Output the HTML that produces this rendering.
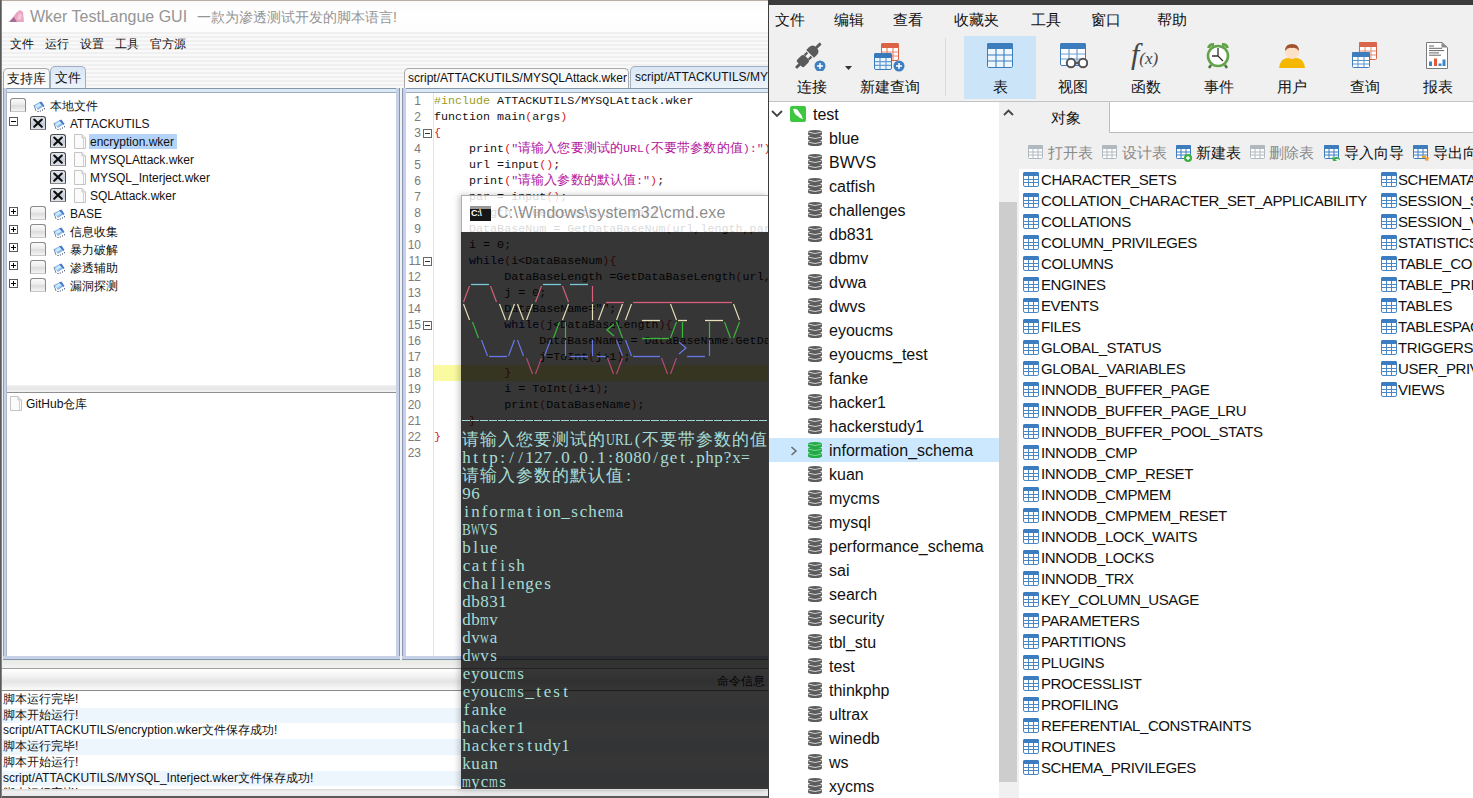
<!DOCTYPE html>
<html><head><meta charset="utf-8">
<style>
*{margin:0;padding:0;box-sizing:border-box}
html,body{width:1473px;height:798px;overflow:hidden;background:#fff;font-family:"Liberation Sans",sans-serif}
.a{position:absolute;white-space:nowrap}
#L{position:absolute;left:0;top:0;width:768px;height:798px;background:#f3f3f3;overflow:hidden}
#N{position:absolute;left:768px;top:0;width:705px;height:798px;background:#f0f0f0;overflow:hidden}
#C{position:absolute;left:461px;top:195px;width:307px;height:595px;overflow:hidden;box-shadow:-2px 0 6px rgba(0,0,0,0.22)}
.cb{width:16px;height:14px;border:1px solid #8a8a8a;border-bottom-color:#c8c8c8;border-radius:3px 3px 1px 1px;background:linear-gradient(#fafafa,#ececec 45%,#dcdcdc 55%,#f4f4f4)}
.cbx{border-color:#4a4a4a;border-bottom-color:#888;background:linear-gradient(#e4e8f0,#cdd4e0 50%,#c4ccda 55%,#dfe4ec)}
.pm{width:9px;height:9px;border:1px solid #5a5a5a;background:#fff}
.tt{font-size:12px;color:#111;line-height:16px}
.ln{left:405px;width:16px;text-align:right;font-family:"Liberation Sans",sans-serif;font-size:12px;color:#7a7a7a;line-height:16px}
.code{white-space:pre;left:434px;font-family:"Liberation Mono",monospace;font-size:11.7px;color:#111;line-height:16px}
.code span{}
.fold{left:423px;width:9px;height:9px;border:1px solid #666;background:#fff}
.fold:after{content:"";position:absolute;left:1px;top:3px;width:5px;height:1px;background:#333}
.log{left:2px;width:766px;font-size:12px;color:#111;line-height:15.7px;height:15.7px;padding-left:1px}
.cmdt{white-space:pre;left:1px;font-family:"Liberation Serif",serif;font-size:17px;line-height:18px;color:#a6dcd6}
.cmdt i{font-style:normal;display:inline-block;width:9px;text-align:center}
.cj{font-size:17px;letter-spacing:1px}
.cjc{font-size:13px;letter-spacing:0.1px}

.cmdt b{font-weight:normal;display:inline-block;transform-origin:0 50%}

</style></head><body>
<div id="L">
 <!-- title -->
 <div class="a" style="left:0;top:0;width:768px;height:32px;background:linear-gradient(#fafafa,#fff 40%,#fdfdfd);border-top:1px solid #b9aea6"></div>
 <svg class="a" style="left:8px;top:9px" width="17" height="14" viewBox="0 0 17 14"><path d="M1 13 L9 3 L12 1 L15 3 L16 13 Z" fill="#e9a6c3"/><path d="M1 13 L6 8 L9 13Z" fill="#a56b96"/><path d="M11 4 L14 6 L13 11 L9 10Z" fill="#f3c4da"/></svg>
 <div class="a" style="left:30px;top:8px;font-size:16px;color:#959595">Wker TestLangue GUI</div>
 <div class="a" style="left:197px;top:8px;font-size:14.3px;color:#959595">一款为渗透测试开发的脚本语言!</div>
 <!-- menubar + stripes -->
 <div class="a" style="left:0;top:32px;width:768px;height:58px;background:repeating-linear-gradient(#f0f0f0 0px,#f0f0f0 2px,#f9f9f9 2px,#f9f9f9 4px)"></div>
 <div class="a" style="left:10px;top:36px;font-size:12px;color:#111;word-spacing:0">文件</div>
 <div class="a" style="left:45px;top:36px;font-size:12px;color:#111">运行</div>
 <div class="a" style="left:80px;top:36px;font-size:12px;color:#111">设置</div>
 <div class="a" style="left:115px;top:36px;font-size:12px;color:#111">工具</div>
 <div class="a" style="left:150px;top:36px;font-size:12px;color:#111">官方源</div>
 <!-- left tabs -->
 <div class="a" style="left:3px;top:68px;width:47px;height:21px;border:1px solid #a9a9a9;border-bottom:none;border-radius:5px 5px 0 0;background:linear-gradient(#f7f7f7,#fdfdfd)"></div>
 <div class="a" style="left:7px;top:70px;font-size:13px;color:#111">支持库</div>
 <div class="a" style="left:50px;top:66px;width:36px;height:23px;border:1px solid #9fb0c4;border-bottom:none;border-radius:5px 5px 0 0;background:linear-gradient(#d9e6f3,#eef4fb)"></div>
 <div class="a" style="left:55px;top:69px;font-size:13px;color:#111">文件</div>
 <!-- editor tabs -->
 <div class="a" style="left:404px;top:68px;width:225px;height:21px;border:1px solid #a9a9a9;border-bottom:none;border-radius:5px 5px 0 0;background:linear-gradient(#f7f7f7,#fdfdfd)"></div>
 <div class="a" style="left:408px;top:71px;font-size:12px;color:#111">script/ATTACKUTILS/MYSQLAttack.wker</div>
 <div class="a" style="left:630px;top:66px;width:160px;height:23px;border:1px solid #9fb0c4;border-bottom:none;border-radius:5px 5px 0 0;background:linear-gradient(#d9e6f3,#eef4fb)"></div>
 <div class="a" style="left:635px;top:70px;font-size:12px;color:#111">script/ATTACKUTILS/MYSQLAttack.wker</div>
 <!-- tree panel -->
 <div class="a" style="left:3px;top:88px;width:397px;height:5px;background:#dce8f4;border-top:1px solid #8496ac;border-bottom:1px solid #9aabbf"></div>
 <div class="a" style="left:3px;top:88px;width:4px;height:572px;background:#c6d0e6;border-left:1px solid #8d9bb0;border-right:1px solid #aab8cc"></div>
 <div class="a" style="left:396px;top:88px;width:4px;height:572px;background:#c6d0e6;border-right:1px solid #8496ac"></div>
 <div class="a" style="left:3px;top:656px;width:397px;height:4px;background:#c6d0e6;border-bottom:1px solid #8496ac"></div>
 <div class="a" style="left:7px;top:93px;width:389px;height:292px;background:#fff"></div>
 <div class="a" style="left:7px;top:385px;width:389px;height:8px;background:linear-gradient(#f0f0f0,#e6e6e6 50%,#f3f3f3);border-bottom:1px solid #8f8f8f"></div>
 <div class="a" style="left:7px;top:393px;width:389px;height:263px;background:#fff"></div>
 <!-- editor panel -->
 <div class="a" style="left:402px;top:88px;width:366px;height:5px;background:#dce8f4;border-top:1px solid #8496ac;border-bottom:1px solid #9aabbf"></div>
 <div class="a" style="left:402px;top:88px;width:4px;height:572px;background:#c8ccee;border-left:1px solid #8496ac"></div>
 <div class="a" style="left:402px;top:656px;width:366px;height:4px;background:#c6d0e6;border-bottom:1px solid #8496ac"></div>
 <div class="a" style="left:406px;top:93px;width:362px;height:563px;background:#fff"></div>
 <div class="a" style="left:433px;top:93px;width:1px;height:563px;background:#e4e4e4"></div>
 <!-- bottom area -->
 <div class="a" style="left:0;top:660px;width:768px;height:8px;background:linear-gradient(#e8eae4,#f2f2f2)"></div>
 <div class="a" style="left:0;top:668px;width:768px;height:23px;background:linear-gradient(#fff,#f4f4f4 30%,#e5e5e5 60%,#fafafa);border-top:1px solid #a0a0a0;border-bottom:1px solid #8a8a8a"></div>
 <div class="a" style="left:0;top:691px;width:768px;height:107px;background:#fff"></div>
<!--BOTTOM-->
<div class="a cb" style="left:10px;top:98px"></div>
<svg class="a" style="left:33px;top:101px" width="13" height="12" viewBox="0 0 13 12"><path d="M1 4 L7 1 L11 5 L5 9 Z" fill="#8fb6ec"/><path d="M2 5 L7 2 L9 4 L4 7Z" fill="#c6ecfc"/><path d="M6 1.5 L8.5 0.5 L11.5 5 L10.5 6Z" fill="#4a78c8"/><path d="M1 4 L3 10" stroke="#6d8aa8" stroke-width="1"/><path d="M4.5 10.5 H5.5 M6.8 10 H7.8 M9 9 H10 M11 7.8 H12" stroke="#2a3a5a" stroke-width="1.1"/></svg>
<div class="a tt" style="left:50px;top:98px">本地文件</div>
<div class="a pm" style="left:9px;top:117px"><div style="position:absolute;left:1px;top:3px;width:5px;height:1px;background:#000"></div></div>
<div class="a cb cbx" style="left:30px;top:116px"><svg width="16" height="14" viewBox="0 0 16 14" style="position:absolute;left:-1px;top:-1px"><path d="M4.2 3.5 L11.8 10.8 M11.8 3.5 L4.2 10.8" stroke="#0d0d0d" stroke-width="2.1" stroke-linecap="round"/></svg></div>
<svg class="a" style="left:53px;top:119px" width="13" height="12" viewBox="0 0 13 12"><path d="M1 4 L7 1 L11 5 L5 9 Z" fill="#8fb6ec"/><path d="M2 5 L7 2 L9 4 L4 7Z" fill="#c6ecfc"/><path d="M6 1.5 L8.5 0.5 L11.5 5 L10.5 6Z" fill="#4a78c8"/><path d="M1 4 L3 10" stroke="#6d8aa8" stroke-width="1"/><path d="M4.5 10.5 H5.5 M6.8 10 H7.8 M9 9 H10 M11 7.8 H12" stroke="#2a3a5a" stroke-width="1.1"/></svg>
<div class="a tt" style="left:70px;top:116px">ATTACKUTILS</div>
<div class="a cb cbx" style="left:50px;top:134px"><svg width="16" height="14" viewBox="0 0 16 14" style="position:absolute;left:-1px;top:-1px"><path d="M4.2 3.5 L11.8 10.8 M11.8 3.5 L4.2 10.8" stroke="#0d0d0d" stroke-width="2.1" stroke-linecap="round"/></svg></div>
<svg class="a" style="left:74px;top:134px" width="12" height="15" viewBox="0 0 12 15"><path d="M0.5 0.5 H8 L11.5 4 V14.5 H0.5Z" fill="#fbfbfb" stroke="#c4c4c4"/><path d="M8 0.5 V4 H11.5" fill="#e8e8e8" stroke="#c4c4c4"/><path d="M9.5 5 V14" stroke="#d0d0d0"/></svg>
<div class="a" style="left:89px;top:134px;width:88px;height:15px;background:#b3d4f8"></div>
<div class="a tt" style="left:90px;top:134px">encryption.wker</div>
<div class="a cb cbx" style="left:50px;top:152px"><svg width="16" height="14" viewBox="0 0 16 14" style="position:absolute;left:-1px;top:-1px"><path d="M4.2 3.5 L11.8 10.8 M11.8 3.5 L4.2 10.8" stroke="#0d0d0d" stroke-width="2.1" stroke-linecap="round"/></svg></div>
<svg class="a" style="left:74px;top:152px" width="12" height="15" viewBox="0 0 12 15"><path d="M0.5 0.5 H8 L11.5 4 V14.5 H0.5Z" fill="#fbfbfb" stroke="#c4c4c4"/><path d="M8 0.5 V4 H11.5" fill="#e8e8e8" stroke="#c4c4c4"/><path d="M9.5 5 V14" stroke="#d0d0d0"/></svg>
<div class="a tt" style="left:90px;top:152px">MYSQLAttack.wker</div>
<div class="a cb cbx" style="left:50px;top:170px"><svg width="16" height="14" viewBox="0 0 16 14" style="position:absolute;left:-1px;top:-1px"><path d="M4.2 3.5 L11.8 10.8 M11.8 3.5 L4.2 10.8" stroke="#0d0d0d" stroke-width="2.1" stroke-linecap="round"/></svg></div>
<svg class="a" style="left:74px;top:170px" width="12" height="15" viewBox="0 0 12 15"><path d="M0.5 0.5 H8 L11.5 4 V14.5 H0.5Z" fill="#fbfbfb" stroke="#c4c4c4"/><path d="M8 0.5 V4 H11.5" fill="#e8e8e8" stroke="#c4c4c4"/><path d="M9.5 5 V14" stroke="#d0d0d0"/></svg>
<div class="a tt" style="left:90px;top:170px">MYSQL_Interject.wker</div>
<div class="a cb cbx" style="left:50px;top:188px"><svg width="16" height="14" viewBox="0 0 16 14" style="position:absolute;left:-1px;top:-1px"><path d="M4.2 3.5 L11.8 10.8 M11.8 3.5 L4.2 10.8" stroke="#0d0d0d" stroke-width="2.1" stroke-linecap="round"/></svg></div>
<svg class="a" style="left:74px;top:188px" width="12" height="15" viewBox="0 0 12 15"><path d="M0.5 0.5 H8 L11.5 4 V14.5 H0.5Z" fill="#fbfbfb" stroke="#c4c4c4"/><path d="M8 0.5 V4 H11.5" fill="#e8e8e8" stroke="#c4c4c4"/><path d="M9.5 5 V14" stroke="#d0d0d0"/></svg>
<div class="a tt" style="left:90px;top:188px">SQLAttack.wker</div>
<div class="a pm" style="left:9px;top:207px"><div style="position:absolute;left:1px;top:3px;width:5px;height:1px;background:#000"></div><div style="position:absolute;left:3px;top:1px;width:1px;height:5px;background:#000"></div></div>
<div class="a cb" style="left:30px;top:206px"></div>
<svg class="a" style="left:53px;top:209px" width="13" height="12" viewBox="0 0 13 12"><path d="M1 4 L7 1 L11 5 L5 9 Z" fill="#8fb6ec"/><path d="M2 5 L7 2 L9 4 L4 7Z" fill="#c6ecfc"/><path d="M6 1.5 L8.5 0.5 L11.5 5 L10.5 6Z" fill="#4a78c8"/><path d="M1 4 L3 10" stroke="#6d8aa8" stroke-width="1"/><path d="M4.5 10.5 H5.5 M6.8 10 H7.8 M9 9 H10 M11 7.8 H12" stroke="#2a3a5a" stroke-width="1.1"/></svg>
<div class="a tt" style="left:70px;top:206px">BASE</div>
<div class="a pm" style="left:9px;top:225px"><div style="position:absolute;left:1px;top:3px;width:5px;height:1px;background:#000"></div><div style="position:absolute;left:3px;top:1px;width:1px;height:5px;background:#000"></div></div>
<div class="a cb" style="left:30px;top:224px"></div>
<svg class="a" style="left:53px;top:227px" width="13" height="12" viewBox="0 0 13 12"><path d="M1 4 L7 1 L11 5 L5 9 Z" fill="#8fb6ec"/><path d="M2 5 L7 2 L9 4 L4 7Z" fill="#c6ecfc"/><path d="M6 1.5 L8.5 0.5 L11.5 5 L10.5 6Z" fill="#4a78c8"/><path d="M1 4 L3 10" stroke="#6d8aa8" stroke-width="1"/><path d="M4.5 10.5 H5.5 M6.8 10 H7.8 M9 9 H10 M11 7.8 H12" stroke="#2a3a5a" stroke-width="1.1"/></svg>
<div class="a tt" style="left:70px;top:224px">信息收集</div>
<div class="a pm" style="left:9px;top:243px"><div style="position:absolute;left:1px;top:3px;width:5px;height:1px;background:#000"></div><div style="position:absolute;left:3px;top:1px;width:1px;height:5px;background:#000"></div></div>
<div class="a cb" style="left:30px;top:242px"></div>
<svg class="a" style="left:53px;top:245px" width="13" height="12" viewBox="0 0 13 12"><path d="M1 4 L7 1 L11 5 L5 9 Z" fill="#8fb6ec"/><path d="M2 5 L7 2 L9 4 L4 7Z" fill="#c6ecfc"/><path d="M6 1.5 L8.5 0.5 L11.5 5 L10.5 6Z" fill="#4a78c8"/><path d="M1 4 L3 10" stroke="#6d8aa8" stroke-width="1"/><path d="M4.5 10.5 H5.5 M6.8 10 H7.8 M9 9 H10 M11 7.8 H12" stroke="#2a3a5a" stroke-width="1.1"/></svg>
<div class="a tt" style="left:70px;top:242px">暴力破解</div>
<div class="a pm" style="left:9px;top:261px"><div style="position:absolute;left:1px;top:3px;width:5px;height:1px;background:#000"></div><div style="position:absolute;left:3px;top:1px;width:1px;height:5px;background:#000"></div></div>
<div class="a cb" style="left:30px;top:260px"></div>
<svg class="a" style="left:53px;top:263px" width="13" height="12" viewBox="0 0 13 12"><path d="M1 4 L7 1 L11 5 L5 9 Z" fill="#8fb6ec"/><path d="M2 5 L7 2 L9 4 L4 7Z" fill="#c6ecfc"/><path d="M6 1.5 L8.5 0.5 L11.5 5 L10.5 6Z" fill="#4a78c8"/><path d="M1 4 L3 10" stroke="#6d8aa8" stroke-width="1"/><path d="M4.5 10.5 H5.5 M6.8 10 H7.8 M9 9 H10 M11 7.8 H12" stroke="#2a3a5a" stroke-width="1.1"/></svg>
<div class="a tt" style="left:70px;top:260px">渗透辅助</div>
<div class="a pm" style="left:9px;top:279px"><div style="position:absolute;left:1px;top:3px;width:5px;height:1px;background:#000"></div><div style="position:absolute;left:3px;top:1px;width:1px;height:5px;background:#000"></div></div>
<div class="a cb" style="left:30px;top:278px"></div>
<svg class="a" style="left:53px;top:281px" width="13" height="12" viewBox="0 0 13 12"><path d="M1 4 L7 1 L11 5 L5 9 Z" fill="#8fb6ec"/><path d="M2 5 L7 2 L9 4 L4 7Z" fill="#c6ecfc"/><path d="M6 1.5 L8.5 0.5 L11.5 5 L10.5 6Z" fill="#4a78c8"/><path d="M1 4 L3 10" stroke="#6d8aa8" stroke-width="1"/><path d="M4.5 10.5 H5.5 M6.8 10 H7.8 M9 9 H10 M11 7.8 H12" stroke="#2a3a5a" stroke-width="1.1"/></svg>
<div class="a tt" style="left:70px;top:278px">漏洞探测</div>
<svg class="a" style="left:10px;top:396px" width="12" height="15" viewBox="0 0 12 15"><path d="M0.5 0.5 H8 L11.5 4 V14.5 H0.5Z" fill="#fbfbfb" stroke="#c4c4c4"/><path d="M8 0.5 V4 H11.5" fill="#e8e8e8" stroke="#c4c4c4"/><path d="M9.5 5 V14" stroke="#d0d0d0"/></svg>
<div class="a tt" style="left:26px;top:396px">GitHub仓库</div>
<div class="a" style="left:434px;top:365px;width:334px;height:16px;background:#fafaa0"></div>
<div class="a ln" style="top:93px">1</div>
<div class="a code" style="top:93px"><span style="color:#9c9c1a">#include</span> ATTACKUTILS/MYSQLAttack.wker</div>
<div class="a ln" style="top:109px">2</div>
<div class="a code" style="top:109px">function main<span style="color:#d82020">(</span>args<span style="color:#d82020">)</span></div>
<div class="a ln" style="top:125px">3</div>
<div class="a code" style="top:125px"><span style="color:#d82020">{</span></div>
<div class="a ln" style="top:141px">4</div>
<div class="a code" style="top:141px">     print<span style="color:#d82020">(</span><span style="color:#b5179e">"<span class="cjc">请输入您要测试的</span>URL(<span class="cjc">不要带参数的值</span>):"</span><span style="color:#d82020">)</span>;</div>
<div class="a ln" style="top:157px">5</div>
<div class="a code" style="top:157px">     url =input<span style="color:#d82020">()</span>;</div>
<div class="a ln" style="top:173px">6</div>
<div class="a code" style="top:173px">     print<span style="color:#d82020">(</span><span style="color:#b5179e">"<span class="cjc">请输入参数的默认值</span>:"</span><span style="color:#d82020">)</span>;</div>
<div class="a ln" style="top:189px">7</div>
<div class="a code" style="top:189px">     par = input<span style="color:#d82020">()</span>;</div>
<div class="a ln" style="top:205px">8</div>
<div class="a code" style="top:205px">     length = GetLength<span style="color:#d82020">(</span>url,par<span style="color:#d82020">)</span>;</div>
<div class="a ln" style="top:221px">9</div>
<div class="a code" style="top:221px">     DataBaseNum = GetDataBaseNum<span style="color:#d82020">(</span>url,length,par<span style="color:#d82020">)</span>;</div>
<div class="a ln" style="top:237px">10</div>
<div class="a code" style="top:237px">     i = 0;</div>
<div class="a ln" style="top:253px">11</div>
<div class="a code" style="top:253px">     <span style="color:#00007f">while</span><span style="color:#d82020">(</span>i&lt;DataBaseNum<span style="color:#d82020">)</span><span style="color:#d82020">{</span></div>
<div class="a ln" style="top:269px">12</div>
<div class="a code" style="top:269px">          DataBaseLength =GetDataBaseLength<span style="color:#d82020">(</span>url,length,par<span style="color:#d82020">)</span>;</div>
<div class="a ln" style="top:285px">13</div>
<div class="a code" style="top:285px">          j = 0;</div>
<div class="a ln" style="top:301px">14</div>
<div class="a code" style="top:301px">          DataBaseName="";</div>
<div class="a ln" style="top:317px">15</div>
<div class="a code" style="top:317px">          <span style="color:#00007f">while</span><span style="color:#d82020">(</span>j&lt;DataBaseLength<span style="color:#d82020">)</span><span style="color:#d82020">{</span></div>
<div class="a ln" style="top:333px">16</div>
<div class="a code" style="top:333px">               DataBaseName = DataBaseName.GetDataBaseName<span style="color:#d82020">(</span>url<span style="color:#d82020">)</span></div>
<div class="a ln" style="top:349px">17</div>
<div class="a code" style="top:349px">               j=ToInt<span style="color:#d82020">(</span>j+1<span style="color:#d82020">)</span>;</div>
<div class="a ln" style="top:365px">18</div>
<div class="a code" style="top:365px">          <span style="color:#d82020">}</span></div>
<div class="a ln" style="top:381px">19</div>
<div class="a code" style="top:381px">          i = ToInt<span style="color:#d82020">(</span>i+1<span style="color:#d82020">)</span>;</div>
<div class="a ln" style="top:397px">20</div>
<div class="a code" style="top:397px">          print<span style="color:#d82020">(</span>DataBaseName<span style="color:#d82020">)</span>;</div>
<div class="a ln" style="top:413px">21</div>
<div class="a code" style="top:413px">     <span style="color:#d82020">}</span></div>
<div class="a ln" style="top:429px">22</div>
<div class="a code" style="top:429px"><span style="color:#d82020">}</span></div>
<div class="a ln" style="top:445px">23</div>
<div class="a fold" style="top:129px"></div>
<div class="a fold" style="top:257px"></div>
<div class="a fold" style="top:321px"></div>
<div class="a log" style="top:692.0px;background:#fff">脚本运行完毕!</div>
<div class="a log" style="top:707.7px;background:#edf5fd">脚本开始运行!</div>
<div class="a log" style="top:723.4px;background:#fff">script/ATTACKUTILS/encryption.wker文件保存成功!</div>
<div class="a log" style="top:739.1px;background:#edf5fd">脚本运行完毕!</div>
<div class="a log" style="top:754.8px;background:#fff">脚本开始运行!</div>
<div class="a log" style="top:770.5px;background:#edf5fd">script/ATTACKUTILS/MYSQL_Interject.wker文件保存成功!</div>
<div class="a log" style="top:786.2px;background:#fff">脚本运行完毕!</div>
<div class="a" style="left:717px;top:673px;font-size:12px;color:#222">命令信息</div>
<div class="a" style="left:0;top:789px;width:768px;height:7px;background:linear-gradient(#d8d8d8,#f0f0f0 40%,#e8e8e8)"></div>
<div class="a" style="left:0;top:796px;width:768px;height:2px;background:#5a5a5a"></div>
<div class="a" style="left:0;top:0;width:2px;height:798px;background:linear-gradient(90deg,#444,#999)"></div>
</div>

<div id="C">
<div class="a" style="left:0;top:0;width:307px;height:37px;background:rgba(255,255,255,0.84);border:1px solid rgba(140,140,140,0.7);border-bottom:none;border-right:none"></div>
<div class="a" style="left:9px;top:11px;width:21px;height:15px;background:#161616;border-top:3px solid #9a9a9a"><span style="position:absolute;left:1px;top:-1px;font-size:9px;font-weight:bold;color:#fff;font-family:'Liberation Sans',sans-serif;letter-spacing:-0.6px">C:\</span></div>
<div class="a" style="left:36px;top:9px;font-size:16px;letter-spacing:0.2px;color:rgba(120,120,120,0.85)">C:\Windows\system32\cmd.exe</div>
<div class="a" style="left:0;top:37px;width:307px;height:557px;background:rgba(0,0,0,0.79)"></div>
<svg class="a" style="left:0;top:0" width="307" height="595"><path d="M10 89.5 H19" stroke="#78c8d8" stroke-width="1.3"/><path d="M19 89.5 H28" stroke="#78c8d8" stroke-width="1.3"/><path d="M82 89.5 H91" stroke="#78c8d8" stroke-width="1.3"/><path d="M91 89.5 H100" stroke="#78c8d8" stroke-width="1.3"/><path d="M109 89.5 H118" stroke="#78c8d8" stroke-width="1.3"/><path d="M118 89.5 H127" stroke="#78c8d8" stroke-width="1.3"/><path d="M2.5 107 L8.5 91" stroke="#d8607a" stroke-width="1.2"/><path d="M29.5 91 L35.5 107" stroke="#d8607a" stroke-width="1.2"/><path d="M74.5 107 L80.5 91" stroke="#d8607a" stroke-width="1.2"/><path d="M101.5 91 L107.5 107" stroke="#d8607a" stroke-width="1.2"/><path d="M131.5 91 V107" stroke="#d8607a" stroke-width="1.2"/><path d="M145 107.5 H154" stroke="#d8607a" stroke-width="1.3"/><path d="M154 107.5 H163" stroke="#d8607a" stroke-width="1.3"/><path d="M172 107.5 H181" stroke="#d8607a" stroke-width="1.3"/><path d="M181 107.5 H190" stroke="#d8607a" stroke-width="1.3"/><path d="M190 107.5 H199" stroke="#d8607a" stroke-width="1.3"/><path d="M199 107.5 H208" stroke="#d8607a" stroke-width="1.3"/><path d="M208 107.5 H217" stroke="#d8607a" stroke-width="1.3"/><path d="M217 107.5 H226" stroke="#d8607a" stroke-width="1.3"/><path d="M226 107.5 H235" stroke="#d8607a" stroke-width="1.3"/><path d="M235 107.5 H244" stroke="#d8607a" stroke-width="1.3"/><path d="M244 107.5 H253" stroke="#d8607a" stroke-width="1.3"/><path d="M253 107.5 H262" stroke="#d8607a" stroke-width="1.3"/><path d="M262 107.5 H271" stroke="#d8607a" stroke-width="1.3"/><path d="M2.5 109 L8.5 125" stroke="#e8e0b8" stroke-width="1.2"/><path d="M38.5 109 L44.5 125" stroke="#e8e0b8" stroke-width="1.2"/><path d="M47.5 125 L53.5 109" stroke="#e8e0b8" stroke-width="1.2"/><path d="M56.5 109 L62.5 125" stroke="#e8e0b8" stroke-width="1.2"/><path d="M65.5 125 L71.5 109" stroke="#e8e0b8" stroke-width="1.2"/><path d="M101.5 125 L107.5 109" stroke="#e8e0b8" stroke-width="1.2"/><path d="M131.5 109 V125" stroke="#e8e0b8" stroke-width="1.2"/><path d="M137.5 125 L143.5 109" stroke="#e8e0b8" stroke-width="1.2"/><path d="M155.5 125 L161.5 109" stroke="#e8e0b8" stroke-width="1.2"/><path d="M164.5 125 L170.5 109" stroke="#e8e0b8" stroke-width="1.2"/><path d="M181 125.5 H190" stroke="#e8e0b8" stroke-width="1.3"/><path d="M190 125.5 H199" stroke="#e8e0b8" stroke-width="1.3"/><path d="M209.5 109 L215.5 125" stroke="#e8e0b8" stroke-width="1.2"/><path d="M217 125.5 H226" stroke="#e8e0b8" stroke-width="1.3"/><path d="M244 125.5 H253" stroke="#e8e0b8" stroke-width="1.3"/><path d="M253 125.5 H262" stroke="#e8e0b8" stroke-width="1.3"/><path d="M272.5 109 L278.5 125" stroke="#e8e0b8" stroke-width="1.2"/><path d="M11.5 127 L17.5 143" stroke="#3cb83c" stroke-width="1.2"/><path d="M92.5 143 L98.5 127" stroke="#3cb83c" stroke-width="1.2"/><path d="M104.5 127 V143" stroke="#3cb83c" stroke-width="1.2"/><path d="M153 129 L146 135 L153 141" stroke="#3cb83c" stroke-width="1.2" fill="none"/><path d="M155.5 127 L161.5 143" stroke="#3cb83c" stroke-width="1.2"/><path d="M181 143.5 H190" stroke="#3cb83c" stroke-width="1.3"/><path d="M190 143.5 H199" stroke="#3cb83c" stroke-width="1.3"/><path d="M199 143.5 H208" stroke="#3cb83c" stroke-width="1.3"/><path d="M209.5 143 L215.5 127" stroke="#3cb83c" stroke-width="1.2"/><path d="M221.5 127 V143" stroke="#3cb83c" stroke-width="1.2"/><path d="M248.5 127 V143" stroke="#3cb83c" stroke-width="1.2"/><path d="M263.5 127 L269.5 143" stroke="#3cb83c" stroke-width="1.2"/><path d="M272.5 143 L278.5 127" stroke="#3cb83c" stroke-width="1.2"/><path d="M20.5 145 L26.5 161" stroke="#6878e8" stroke-width="1.2"/><path d="M28 161.5 H37" stroke="#6878e8" stroke-width="1.3"/><path d="M37 161.5 H46" stroke="#6878e8" stroke-width="1.3"/><path d="M47.5 161 L53.5 145" stroke="#6878e8" stroke-width="1.2"/><path d="M56.5 145 L62.5 161" stroke="#6878e8" stroke-width="1.2"/><path d="M83.5 161 L89.5 145" stroke="#6878e8" stroke-width="1.2"/><path d="M104.5 145 V161" stroke="#6878e8" stroke-width="1.2"/><path d="M109 161.5 H118" stroke="#6878e8" stroke-width="1.3"/><path d="M118 161.5 H127" stroke="#6878e8" stroke-width="1.3"/><path d="M131.5 145 V161" stroke="#6878e8" stroke-width="1.2"/><path d="M136 161.5 H145" stroke="#6878e8" stroke-width="1.3"/><path d="M155.5 145 L161.5 161" stroke="#6878e8" stroke-width="1.2"/><path d="M164.5 145 L170.5 161" stroke="#6878e8" stroke-width="1.2"/><path d="M172 161.5 H181" stroke="#6878e8" stroke-width="1.3"/><path d="M181 161.5 H190" stroke="#6878e8" stroke-width="1.3"/><path d="M190 161.5 H199" stroke="#6878e8" stroke-width="1.3"/><path d="M218 147 L225 153 L218 159" stroke="#6878e8" stroke-width="1.2" fill="none"/><path d="M226 161.5 H235" stroke="#6878e8" stroke-width="1.3"/><path d="M235 161.5 H244" stroke="#6878e8" stroke-width="1.3"/><path d="M248.5 145 V161" stroke="#6878e8" stroke-width="1.2"/><path d="M65.5 163 L71.5 179" stroke="#b84a7a" stroke-width="1.2"/><path d="M74.5 179 L80.5 163" stroke="#b84a7a" stroke-width="1.2"/><path d="M146.5 163 L152.5 179" stroke="#b84a7a" stroke-width="1.2"/><path d="M155.5 179 L161.5 163" stroke="#b84a7a" stroke-width="1.2"/><path d="M200.5 163 L206.5 179" stroke="#b84a7a" stroke-width="1.2"/><path d="M209.5 179 L215.5 163" stroke="#b84a7a" stroke-width="1.2"/><path d="M1 225.5 H307" stroke="#a0d8d0" stroke-width="1.1" stroke-dasharray="8 1"/></svg>
<div class="a cmdt" style="top:236px"><span class="cj">请输入您要测试的</span><i><b style="transform:scaleX(0.717)">U</b></i><i><b style="transform:scaleX(0.776)">R</b></i><i><b style="transform:scaleX(0.847)">L</b></i><i>(</i><span class="cj">不要带参数的值</span><i>)</i></div>
<div class="a cmdt" style="top:254px"><i>h</i><i>t</i><i>t</i><i>p</i><i>:</i><i>/</i><i>/</i><i>1</i><i>2</i><i>7</i><i>.</i><i>0</i><i>.</i><i>0</i><i>.</i><i>1</i><i>:</i><i>8</i><i>0</i><i>8</i><i>0</i><i>/</i><i>g</i><i>e</i><i>t</i><i>.</i><i>p</i><i>h</i><i>p</i><i>?</i><i>x</i><i><b style="transform:scaleX(0.917)">=</b></i></div>
<div class="a cmdt" style="top:272px"><span class="cj">请输入参数的默认值</span><i>:</i></div>
<div class="a cmdt" style="top:290px"><i>9</i><i>6</i></div>
<div class="a cmdt" style="top:308px"><i>i</i><i>n</i><i>f</i><i>o</i><i>r</i><i><b style="transform:scaleX(0.665)">m</b></i><i>a</i><i>t</i><i>i</i><i>o</i><i>n</i><i>_</i><i>s</i><i>c</i><i>h</i><i>e</i><i><b style="transform:scaleX(0.665)">m</b></i><i>a</i></div>
<div class="a cmdt" style="top:326px"><i><b style="transform:scaleX(0.776)">B</b></i><i><b style="transform:scaleX(0.548)">W</b></i><i><b style="transform:scaleX(0.717)">V</b></i><i><b style="transform:scaleX(0.929)">S</b></i></div>
<div class="a cmdt" style="top:344px"><i>b</i><i>l</i><i>u</i><i>e</i></div>
<div class="a cmdt" style="top:362px"><i>c</i><i>a</i><i>t</i><i>f</i><i>i</i><i>s</i><i>h</i></div>
<div class="a cmdt" style="top:380px"><i>c</i><i>h</i><i>a</i><i>l</i><i>l</i><i>e</i><i>n</i><i>g</i><i>e</i><i>s</i></div>
<div class="a cmdt" style="top:398px"><i>d</i><i>b</i><i>8</i><i>3</i><i>1</i></div>
<div class="a cmdt" style="top:416px"><i>d</i><i>b</i><i><b style="transform:scaleX(0.665)">m</b></i><i>v</i></div>
<div class="a cmdt" style="top:434px"><i>d</i><i>v</i><i><b style="transform:scaleX(0.717)">w</b></i><i>a</i></div>
<div class="a cmdt" style="top:452px"><i>d</i><i><b style="transform:scaleX(0.717)">w</b></i><i>v</i><i>s</i></div>
<div class="a cmdt" style="top:470px"><i>e</i><i>y</i><i>o</i><i>u</i><i>c</i><i><b style="transform:scaleX(0.665)">m</b></i><i>s</i></div>
<div class="a cmdt" style="top:488px"><i>e</i><i>y</i><i>o</i><i>u</i><i>c</i><i><b style="transform:scaleX(0.665)">m</b></i><i>s</i><i>_</i><i>t</i><i>e</i><i>s</i><i>t</i></div>
<div class="a cmdt" style="top:506px"><i>f</i><i>a</i><i>n</i><i>k</i><i>e</i></div>
<div class="a cmdt" style="top:524px"><i>h</i><i>a</i><i>c</i><i>k</i><i>e</i><i>r</i><i>1</i></div>
<div class="a cmdt" style="top:542px"><i>h</i><i>a</i><i>c</i><i>k</i><i>e</i><i>r</i><i>s</i><i>t</i><i>u</i><i>d</i><i>y</i><i>1</i></div>
<div class="a cmdt" style="top:560px"><i>k</i><i>u</i><i>a</i><i>n</i></div>
<div class="a cmdt" style="top:578px"><i><b style="transform:scaleX(0.665)">m</b></i><i>y</i><i>c</i><i><b style="transform:scaleX(0.665)">m</b></i><i>s</i></div>
</div>
<div id="N">
<div class="a" style="left:0;top:0;width:705px;height:5px;background:#3b3b3b"></div>
<div class="a" style="left:0;top:0;width:1px;height:798px;background:#3b3b3b"></div>
<div class="a" style="left:7px;top:11px;font-size:15px;color:#111">文件</div>
<div class="a" style="left:66px;top:11px;font-size:15px;color:#111">编辑</div>
<div class="a" style="left:125px;top:11px;font-size:15px;color:#111">查看</div>
<div class="a" style="left:186px;top:11px;font-size:15px;color:#111">收藏夹</div>
<div class="a" style="left:263px;top:11px;font-size:15px;color:#111">工具</div>
<div class="a" style="left:323px;top:11px;font-size:15px;color:#111">窗口</div>
<div class="a" style="left:389px;top:11px;font-size:15px;color:#111">帮助</div>
<div class="a" style="left:196px;top:36px;width:72px;height:63px;background:#cce4f7"></div>
<div class="a" style="left:177px;top:38px;width:1px;height:58px;background:#d9d9d9"></div>
<div class="a" style="left:-16px;top:78px;width:120px;text-align:center;font-size:15px;color:#111">连接</div>
<div class="a" style="left:62px;top:78px;width:120px;text-align:center;font-size:15px;color:#111">新建查询</div>
<div class="a" style="left:172px;top:78px;width:120px;text-align:center;font-size:15px;color:#111">表</div>
<div class="a" style="left:245px;top:78px;width:120px;text-align:center;font-size:15px;color:#111">视图</div>
<div class="a" style="left:318px;top:78px;width:120px;text-align:center;font-size:15px;color:#111">函数</div>
<div class="a" style="left:391px;top:78px;width:120px;text-align:center;font-size:15px;color:#111">事件</div>
<div class="a" style="left:464px;top:78px;width:120px;text-align:center;font-size:15px;color:#111">用户</div>
<div class="a" style="left:537px;top:78px;width:120px;text-align:center;font-size:15px;color:#111">查询</div>
<div class="a" style="left:610px;top:78px;width:120px;text-align:center;font-size:15px;color:#111">报表</div>
<svg class="a" style="left:26px;top:41px" width="34" height="30" viewBox="0 0 34 30"><g transform="rotate(-45 14 15)" fill="#5a5a5a"><rect x="-3" y="13.5" width="7" height="3" rx="1"/><path d="M4 10 H9 Q12 10 12 13 V17 Q12 20 9 20 H4 Q2 20 2 18 V12 Q2 10 4 10Z"/><rect x="12" y="11" width="4" height="2.2"/><rect x="12" y="16.8" width="4" height="2.2"/><path d="M17 9.5 H21 Q26 9.5 26 15 Q26 20.5 21 20.5 H17Z"/><rect x="25" y="13.5" width="7" height="3" rx="1"/></g><circle cx="26" cy="25" r="5.5" fill="#3f7fc0"/><path d="M26 22V28M23 25H29" stroke="#fff" stroke-width="1.5"/></svg>
<svg class="a" style="left:77px;top:66px" width="7" height="4" viewBox="0 0 7 4"><path d="M0 0H7L3.5 4Z" fill="#333"/></svg>
<svg class="a" style="left:106px;top:42px" width="32" height="30" viewBox="0 0 32 30"><rect x="7.5" y="1.5" width="17" height="17" rx="1.5" fill="#fff" stroke="#dc6446"/><rect x="7" y="1" width="18" height="5" rx="1.5" fill="#dc6446"/><path d="M13 6V18M19 6V18M8 10H24M8 14H24" stroke="#e8896e" stroke-width="1.2"/><rect x="0.5" y="11.5" width="17" height="16" rx="1.5" fill="#fff" stroke="#3a78bc"/><rect x="0" y="11" width="18" height="5" rx="1.5" fill="#3a78bc"/><path d="M6 16V27M12 16V27M1 19.7H17M1 23.4H17" stroke="#3a78bc" stroke-width="1.2"/><path d="M1 16H17V27H1Z" fill="#bfe3f8" opacity="0.35"/><circle cx="25" cy="24" r="5.5" fill="#3f7fc0"/><path d="M25 21V27M22 24H28" stroke="#fff" stroke-width="1.5"/></svg>
<svg class="a" style="left:219px;top:43px" width="26" height="25" viewBox="0 0 26 25"><rect x="0.5" y="0.5" width="25" height="24" rx="1.5" fill="#fff" stroke="#3d7dbe"/><rect x="0" y="0" width="26" height="6" rx="1.5" fill="#3d7dbe"/><rect x="1" y="6" width="24" height="18" fill="#eef7fd"/><path d="M9 6V24M17 6V24M1 12H25M1 18H25" stroke="#3d7dbe" stroke-width="1.1"/></svg>
<svg class="a" style="left:292px;top:43px" width="28" height="26" viewBox="0 0 28 26"><rect x="0.5" y="0.5" width="25" height="22" rx="1.5" fill="#fff" stroke="#3d7dbe"/><rect x="0" y="0" width="26" height="6" rx="1.5" fill="#3d7dbe"/><path d="M9 6V22M17 6V22M1 11H25M1 16H25" stroke="#6d9fd1" stroke-width="1.2"/><circle cx="11" cy="20" r="4.2" fill="#fff" stroke="#555" stroke-width="2"/><circle cx="23" cy="20" r="4.2" fill="#fff" stroke="#555" stroke-width="2"/><path d="M15 20H19" stroke="#555" stroke-width="2"/></svg>
<div class="a" style="left:363px;top:37px;font-family:'Liberation Serif',serif;font-style:italic;font-size:30px;color:#444">f<span style="font-size:17px">(x)</span></div>
<svg class="a" style="left:437px;top:42px" width="26" height="27" viewBox="0 0 26 27"><circle cx="13" cy="14" r="10" fill="#fff" stroke="#62a349" stroke-width="2.6"/><path d="M3.5 6 Q4.5 2 9 2.5 M22.5 6 Q21.5 2 17 2.5" stroke="#62a349" stroke-width="3" fill="none"/><path d="M6 23 L4 26 M20 23 L22 26" stroke="#4a7a3a" stroke-width="2.5"/><path d="M13 6V14H7M13 14L18 19" stroke="#333" stroke-width="1.3" fill="none"/></svg>
<svg class="a" style="left:511px;top:42px" width="26" height="27" viewBox="0 0 26 27"><path d="M0 26 Q1 17 8 16 L18 16 Q25 17 26 26Z" fill="#f5b700"/><circle cx="13" cy="10" r="7" fill="#fce0c8"/><path d="M6 9 Q6 2 13 2 Q20 2 20 9 Q17 5 13 6 Q9 5 6 9Z" fill="#a0522d"/></svg>
<svg class="a" style="left:584px;top:42px" width="26" height="27" viewBox="0 0 26 27"><rect x="7.5" y="0.5" width="17" height="17" rx="1" fill="#fff" stroke="#d9664a"/><rect x="7" y="0" width="18" height="5" rx="1" fill="#d9664a"/><path d="M13 5V17M19 5V17M8 9H24M8 13H24" stroke="#e28a72"/><rect x="0.5" y="10.5" width="17" height="15" rx="1" fill="#fff" stroke="#3d7dbe"/><rect x="0" y="10" width="18" height="5" rx="1" fill="#3d7dbe"/><path d="M6 15V25M12 15V25M1 18.5H17M1 22H17" stroke="#5a93cc"/></svg>
<svg class="a" style="left:658px;top:42px" width="22" height="27" viewBox="0 0 22 27"><path d="M0.5 0.5H16L21.5 5.5V26.5H0.5Z" fill="#fff" stroke="#7a7a7a"/><path d="M15.5 0.5L21.5 5.5H15.5Z" fill="#8a8a8a"/><path d="M3 4H8M3 6.3H16M3 8.6H18M3 10.9H13M3 13.2H15" stroke="#555" stroke-width="0.9"/><rect x="3" y="19.5" width="3" height="4.5" fill="#3d86c6"/><rect x="8" y="16.5" width="3" height="7.5" fill="#e05a3a"/><rect x="12.5" y="21.5" width="3" height="2.5" fill="#3d86c6"/><rect x="16.5" y="17.5" width="3" height="6.5" fill="#3d86c6"/></svg>
<div class="a" style="left:1px;top:101px;width:704px;height:1px;background:#c4c4c4"></div>
<div class="a" style="left:1px;top:102px;width:230px;height:696px;background:#fff"></div>
<div class="a" style="left:231px;top:102px;width:21px;height:696px;background:#f0f0f0"></div>
<div class="a" style="left:231px;top:202px;width:18px;height:580px;background:#cdcdcd"></div>
<div class="a" style="left:1px;top:438px;width:230px;height:24px;background:#cce8ff"></div>
<svg class="a" style="left:3px;top:110px" width="12" height="8" viewBox="0 0 12 8"><path d="M1 1L6 6L11 1" stroke="#444" stroke-width="1.8" fill="none"/></svg>
<svg class="a" style="left:22px;top:106px" width="16" height="16" viewBox="0 0 16 16"><rect x="0" y="0" width="16" height="16" rx="2" fill="#3ec73e"/><path d="M3 3 Q7 2 9 6 Q12 9 13 13 L10 12 Q8 10 6 9 Q4 7 3 3Z" fill="#fff"/></svg>
<div class="a" style="left:45px;top:106px;font-size:16px;color:#111">test</div>
<svg class="a" style="left:40px;top:130px" width="14" height="16" viewBox="0 0 14 16"><path d="M0 2 Q0 0 7 0 Q14 0 14 2 V4 Q14 6 7 6 Q0 6 0 4Z" fill="#5c5c5c"/><path d="M0.5 2.2 Q7 4.8 13.5 2.2" stroke="#d4d4d4" stroke-width="1" fill="none"/><path d="M0 7 Q0 5 7 5 Q14 5 14 7 V9 Q14 11 7 11 Q0 11 0 9Z" fill="#5c5c5c"/><path d="M0.5 7.2 Q7 9.8 13.5 7.2" stroke="#d4d4d4" stroke-width="1" fill="none"/><path d="M0 12 Q0 10 7 10 Q14 10 14 12 V14 Q14 16 7 16 Q0 16 0 14Z" fill="#5c5c5c"/><path d="M0.5 12.2 Q7 14.8 13.5 12.2" stroke="#d4d4d4" stroke-width="1" fill="none"/></svg>
<div class="a" style="left:61px;top:130px;font-size:16px;color:#111">blue</div>
<svg class="a" style="left:40px;top:154px" width="14" height="16" viewBox="0 0 14 16"><path d="M0 2 Q0 0 7 0 Q14 0 14 2 V4 Q14 6 7 6 Q0 6 0 4Z" fill="#5c5c5c"/><path d="M0.5 2.2 Q7 4.8 13.5 2.2" stroke="#d4d4d4" stroke-width="1" fill="none"/><path d="M0 7 Q0 5 7 5 Q14 5 14 7 V9 Q14 11 7 11 Q0 11 0 9Z" fill="#5c5c5c"/><path d="M0.5 7.2 Q7 9.8 13.5 7.2" stroke="#d4d4d4" stroke-width="1" fill="none"/><path d="M0 12 Q0 10 7 10 Q14 10 14 12 V14 Q14 16 7 16 Q0 16 0 14Z" fill="#5c5c5c"/><path d="M0.5 12.2 Q7 14.8 13.5 12.2" stroke="#d4d4d4" stroke-width="1" fill="none"/></svg>
<div class="a" style="left:61px;top:154px;font-size:16px;color:#111">BWVS</div>
<svg class="a" style="left:40px;top:178px" width="14" height="16" viewBox="0 0 14 16"><path d="M0 2 Q0 0 7 0 Q14 0 14 2 V4 Q14 6 7 6 Q0 6 0 4Z" fill="#5c5c5c"/><path d="M0.5 2.2 Q7 4.8 13.5 2.2" stroke="#d4d4d4" stroke-width="1" fill="none"/><path d="M0 7 Q0 5 7 5 Q14 5 14 7 V9 Q14 11 7 11 Q0 11 0 9Z" fill="#5c5c5c"/><path d="M0.5 7.2 Q7 9.8 13.5 7.2" stroke="#d4d4d4" stroke-width="1" fill="none"/><path d="M0 12 Q0 10 7 10 Q14 10 14 12 V14 Q14 16 7 16 Q0 16 0 14Z" fill="#5c5c5c"/><path d="M0.5 12.2 Q7 14.8 13.5 12.2" stroke="#d4d4d4" stroke-width="1" fill="none"/></svg>
<div class="a" style="left:61px;top:178px;font-size:16px;color:#111">catfish</div>
<svg class="a" style="left:40px;top:202px" width="14" height="16" viewBox="0 0 14 16"><path d="M0 2 Q0 0 7 0 Q14 0 14 2 V4 Q14 6 7 6 Q0 6 0 4Z" fill="#5c5c5c"/><path d="M0.5 2.2 Q7 4.8 13.5 2.2" stroke="#d4d4d4" stroke-width="1" fill="none"/><path d="M0 7 Q0 5 7 5 Q14 5 14 7 V9 Q14 11 7 11 Q0 11 0 9Z" fill="#5c5c5c"/><path d="M0.5 7.2 Q7 9.8 13.5 7.2" stroke="#d4d4d4" stroke-width="1" fill="none"/><path d="M0 12 Q0 10 7 10 Q14 10 14 12 V14 Q14 16 7 16 Q0 16 0 14Z" fill="#5c5c5c"/><path d="M0.5 12.2 Q7 14.8 13.5 12.2" stroke="#d4d4d4" stroke-width="1" fill="none"/></svg>
<div class="a" style="left:61px;top:202px;font-size:16px;color:#111">challenges</div>
<svg class="a" style="left:40px;top:226px" width="14" height="16" viewBox="0 0 14 16"><path d="M0 2 Q0 0 7 0 Q14 0 14 2 V4 Q14 6 7 6 Q0 6 0 4Z" fill="#5c5c5c"/><path d="M0.5 2.2 Q7 4.8 13.5 2.2" stroke="#d4d4d4" stroke-width="1" fill="none"/><path d="M0 7 Q0 5 7 5 Q14 5 14 7 V9 Q14 11 7 11 Q0 11 0 9Z" fill="#5c5c5c"/><path d="M0.5 7.2 Q7 9.8 13.5 7.2" stroke="#d4d4d4" stroke-width="1" fill="none"/><path d="M0 12 Q0 10 7 10 Q14 10 14 12 V14 Q14 16 7 16 Q0 16 0 14Z" fill="#5c5c5c"/><path d="M0.5 12.2 Q7 14.8 13.5 12.2" stroke="#d4d4d4" stroke-width="1" fill="none"/></svg>
<div class="a" style="left:61px;top:226px;font-size:16px;color:#111">db831</div>
<svg class="a" style="left:40px;top:250px" width="14" height="16" viewBox="0 0 14 16"><path d="M0 2 Q0 0 7 0 Q14 0 14 2 V4 Q14 6 7 6 Q0 6 0 4Z" fill="#5c5c5c"/><path d="M0.5 2.2 Q7 4.8 13.5 2.2" stroke="#d4d4d4" stroke-width="1" fill="none"/><path d="M0 7 Q0 5 7 5 Q14 5 14 7 V9 Q14 11 7 11 Q0 11 0 9Z" fill="#5c5c5c"/><path d="M0.5 7.2 Q7 9.8 13.5 7.2" stroke="#d4d4d4" stroke-width="1" fill="none"/><path d="M0 12 Q0 10 7 10 Q14 10 14 12 V14 Q14 16 7 16 Q0 16 0 14Z" fill="#5c5c5c"/><path d="M0.5 12.2 Q7 14.8 13.5 12.2" stroke="#d4d4d4" stroke-width="1" fill="none"/></svg>
<div class="a" style="left:61px;top:250px;font-size:16px;color:#111">dbmv</div>
<svg class="a" style="left:40px;top:274px" width="14" height="16" viewBox="0 0 14 16"><path d="M0 2 Q0 0 7 0 Q14 0 14 2 V4 Q14 6 7 6 Q0 6 0 4Z" fill="#5c5c5c"/><path d="M0.5 2.2 Q7 4.8 13.5 2.2" stroke="#d4d4d4" stroke-width="1" fill="none"/><path d="M0 7 Q0 5 7 5 Q14 5 14 7 V9 Q14 11 7 11 Q0 11 0 9Z" fill="#5c5c5c"/><path d="M0.5 7.2 Q7 9.8 13.5 7.2" stroke="#d4d4d4" stroke-width="1" fill="none"/><path d="M0 12 Q0 10 7 10 Q14 10 14 12 V14 Q14 16 7 16 Q0 16 0 14Z" fill="#5c5c5c"/><path d="M0.5 12.2 Q7 14.8 13.5 12.2" stroke="#d4d4d4" stroke-width="1" fill="none"/></svg>
<div class="a" style="left:61px;top:274px;font-size:16px;color:#111">dvwa</div>
<svg class="a" style="left:40px;top:298px" width="14" height="16" viewBox="0 0 14 16"><path d="M0 2 Q0 0 7 0 Q14 0 14 2 V4 Q14 6 7 6 Q0 6 0 4Z" fill="#5c5c5c"/><path d="M0.5 2.2 Q7 4.8 13.5 2.2" stroke="#d4d4d4" stroke-width="1" fill="none"/><path d="M0 7 Q0 5 7 5 Q14 5 14 7 V9 Q14 11 7 11 Q0 11 0 9Z" fill="#5c5c5c"/><path d="M0.5 7.2 Q7 9.8 13.5 7.2" stroke="#d4d4d4" stroke-width="1" fill="none"/><path d="M0 12 Q0 10 7 10 Q14 10 14 12 V14 Q14 16 7 16 Q0 16 0 14Z" fill="#5c5c5c"/><path d="M0.5 12.2 Q7 14.8 13.5 12.2" stroke="#d4d4d4" stroke-width="1" fill="none"/></svg>
<div class="a" style="left:61px;top:298px;font-size:16px;color:#111">dwvs</div>
<svg class="a" style="left:40px;top:322px" width="14" height="16" viewBox="0 0 14 16"><path d="M0 2 Q0 0 7 0 Q14 0 14 2 V4 Q14 6 7 6 Q0 6 0 4Z" fill="#5c5c5c"/><path d="M0.5 2.2 Q7 4.8 13.5 2.2" stroke="#d4d4d4" stroke-width="1" fill="none"/><path d="M0 7 Q0 5 7 5 Q14 5 14 7 V9 Q14 11 7 11 Q0 11 0 9Z" fill="#5c5c5c"/><path d="M0.5 7.2 Q7 9.8 13.5 7.2" stroke="#d4d4d4" stroke-width="1" fill="none"/><path d="M0 12 Q0 10 7 10 Q14 10 14 12 V14 Q14 16 7 16 Q0 16 0 14Z" fill="#5c5c5c"/><path d="M0.5 12.2 Q7 14.8 13.5 12.2" stroke="#d4d4d4" stroke-width="1" fill="none"/></svg>
<div class="a" style="left:61px;top:322px;font-size:16px;color:#111">eyoucms</div>
<svg class="a" style="left:40px;top:346px" width="14" height="16" viewBox="0 0 14 16"><path d="M0 2 Q0 0 7 0 Q14 0 14 2 V4 Q14 6 7 6 Q0 6 0 4Z" fill="#5c5c5c"/><path d="M0.5 2.2 Q7 4.8 13.5 2.2" stroke="#d4d4d4" stroke-width="1" fill="none"/><path d="M0 7 Q0 5 7 5 Q14 5 14 7 V9 Q14 11 7 11 Q0 11 0 9Z" fill="#5c5c5c"/><path d="M0.5 7.2 Q7 9.8 13.5 7.2" stroke="#d4d4d4" stroke-width="1" fill="none"/><path d="M0 12 Q0 10 7 10 Q14 10 14 12 V14 Q14 16 7 16 Q0 16 0 14Z" fill="#5c5c5c"/><path d="M0.5 12.2 Q7 14.8 13.5 12.2" stroke="#d4d4d4" stroke-width="1" fill="none"/></svg>
<div class="a" style="left:61px;top:346px;font-size:16px;color:#111">eyoucms_test</div>
<svg class="a" style="left:40px;top:370px" width="14" height="16" viewBox="0 0 14 16"><path d="M0 2 Q0 0 7 0 Q14 0 14 2 V4 Q14 6 7 6 Q0 6 0 4Z" fill="#5c5c5c"/><path d="M0.5 2.2 Q7 4.8 13.5 2.2" stroke="#d4d4d4" stroke-width="1" fill="none"/><path d="M0 7 Q0 5 7 5 Q14 5 14 7 V9 Q14 11 7 11 Q0 11 0 9Z" fill="#5c5c5c"/><path d="M0.5 7.2 Q7 9.8 13.5 7.2" stroke="#d4d4d4" stroke-width="1" fill="none"/><path d="M0 12 Q0 10 7 10 Q14 10 14 12 V14 Q14 16 7 16 Q0 16 0 14Z" fill="#5c5c5c"/><path d="M0.5 12.2 Q7 14.8 13.5 12.2" stroke="#d4d4d4" stroke-width="1" fill="none"/></svg>
<div class="a" style="left:61px;top:370px;font-size:16px;color:#111">fanke</div>
<svg class="a" style="left:40px;top:394px" width="14" height="16" viewBox="0 0 14 16"><path d="M0 2 Q0 0 7 0 Q14 0 14 2 V4 Q14 6 7 6 Q0 6 0 4Z" fill="#5c5c5c"/><path d="M0.5 2.2 Q7 4.8 13.5 2.2" stroke="#d4d4d4" stroke-width="1" fill="none"/><path d="M0 7 Q0 5 7 5 Q14 5 14 7 V9 Q14 11 7 11 Q0 11 0 9Z" fill="#5c5c5c"/><path d="M0.5 7.2 Q7 9.8 13.5 7.2" stroke="#d4d4d4" stroke-width="1" fill="none"/><path d="M0 12 Q0 10 7 10 Q14 10 14 12 V14 Q14 16 7 16 Q0 16 0 14Z" fill="#5c5c5c"/><path d="M0.5 12.2 Q7 14.8 13.5 12.2" stroke="#d4d4d4" stroke-width="1" fill="none"/></svg>
<div class="a" style="left:61px;top:394px;font-size:16px;color:#111">hacker1</div>
<svg class="a" style="left:40px;top:418px" width="14" height="16" viewBox="0 0 14 16"><path d="M0 2 Q0 0 7 0 Q14 0 14 2 V4 Q14 6 7 6 Q0 6 0 4Z" fill="#5c5c5c"/><path d="M0.5 2.2 Q7 4.8 13.5 2.2" stroke="#d4d4d4" stroke-width="1" fill="none"/><path d="M0 7 Q0 5 7 5 Q14 5 14 7 V9 Q14 11 7 11 Q0 11 0 9Z" fill="#5c5c5c"/><path d="M0.5 7.2 Q7 9.8 13.5 7.2" stroke="#d4d4d4" stroke-width="1" fill="none"/><path d="M0 12 Q0 10 7 10 Q14 10 14 12 V14 Q14 16 7 16 Q0 16 0 14Z" fill="#5c5c5c"/><path d="M0.5 12.2 Q7 14.8 13.5 12.2" stroke="#d4d4d4" stroke-width="1" fill="none"/></svg>
<div class="a" style="left:61px;top:418px;font-size:16px;color:#111">hackerstudy1</div>
<svg class="a" style="left:22px;top:446px" width="8" height="10" viewBox="0 0 8 10"><path d="M1.5 1L6 5L1.5 9" stroke="#666" stroke-width="1.5" fill="none"/></svg>
<svg class="a" style="left:40px;top:442px" width="14" height="16" viewBox="0 0 14 16"><path d="M0 2 Q0 0 7 0 Q14 0 14 2 V4 Q14 6 7 6 Q0 6 0 4Z" fill="#22aa44"/><path d="M0.5 2.2 Q7 4.8 13.5 2.2" stroke="#8fd89f" stroke-width="0.9" fill="none"/><path d="M0 7 Q0 5 7 5 Q14 5 14 7 V9 Q14 11 7 11 Q0 11 0 9Z" fill="#22aa44"/><path d="M0.5 7.2 Q7 9.8 13.5 7.2" stroke="#8fd89f" stroke-width="0.9" fill="none"/><path d="M0 12 Q0 10 7 10 Q14 10 14 12 V14 Q14 16 7 16 Q0 16 0 14Z" fill="#22aa44"/><path d="M0.5 12.2 Q7 14.8 13.5 12.2" stroke="#8fd89f" stroke-width="0.9" fill="none"/></svg>
<div class="a" style="left:61px;top:442px;font-size:16px;color:#111">information_schema</div>
<svg class="a" style="left:40px;top:466px" width="14" height="16" viewBox="0 0 14 16"><path d="M0 2 Q0 0 7 0 Q14 0 14 2 V4 Q14 6 7 6 Q0 6 0 4Z" fill="#5c5c5c"/><path d="M0.5 2.2 Q7 4.8 13.5 2.2" stroke="#d4d4d4" stroke-width="1" fill="none"/><path d="M0 7 Q0 5 7 5 Q14 5 14 7 V9 Q14 11 7 11 Q0 11 0 9Z" fill="#5c5c5c"/><path d="M0.5 7.2 Q7 9.8 13.5 7.2" stroke="#d4d4d4" stroke-width="1" fill="none"/><path d="M0 12 Q0 10 7 10 Q14 10 14 12 V14 Q14 16 7 16 Q0 16 0 14Z" fill="#5c5c5c"/><path d="M0.5 12.2 Q7 14.8 13.5 12.2" stroke="#d4d4d4" stroke-width="1" fill="none"/></svg>
<div class="a" style="left:61px;top:466px;font-size:16px;color:#111">kuan</div>
<svg class="a" style="left:40px;top:490px" width="14" height="16" viewBox="0 0 14 16"><path d="M0 2 Q0 0 7 0 Q14 0 14 2 V4 Q14 6 7 6 Q0 6 0 4Z" fill="#5c5c5c"/><path d="M0.5 2.2 Q7 4.8 13.5 2.2" stroke="#d4d4d4" stroke-width="1" fill="none"/><path d="M0 7 Q0 5 7 5 Q14 5 14 7 V9 Q14 11 7 11 Q0 11 0 9Z" fill="#5c5c5c"/><path d="M0.5 7.2 Q7 9.8 13.5 7.2" stroke="#d4d4d4" stroke-width="1" fill="none"/><path d="M0 12 Q0 10 7 10 Q14 10 14 12 V14 Q14 16 7 16 Q0 16 0 14Z" fill="#5c5c5c"/><path d="M0.5 12.2 Q7 14.8 13.5 12.2" stroke="#d4d4d4" stroke-width="1" fill="none"/></svg>
<div class="a" style="left:61px;top:490px;font-size:16px;color:#111">mycms</div>
<svg class="a" style="left:40px;top:514px" width="14" height="16" viewBox="0 0 14 16"><path d="M0 2 Q0 0 7 0 Q14 0 14 2 V4 Q14 6 7 6 Q0 6 0 4Z" fill="#5c5c5c"/><path d="M0.5 2.2 Q7 4.8 13.5 2.2" stroke="#d4d4d4" stroke-width="1" fill="none"/><path d="M0 7 Q0 5 7 5 Q14 5 14 7 V9 Q14 11 7 11 Q0 11 0 9Z" fill="#5c5c5c"/><path d="M0.5 7.2 Q7 9.8 13.5 7.2" stroke="#d4d4d4" stroke-width="1" fill="none"/><path d="M0 12 Q0 10 7 10 Q14 10 14 12 V14 Q14 16 7 16 Q0 16 0 14Z" fill="#5c5c5c"/><path d="M0.5 12.2 Q7 14.8 13.5 12.2" stroke="#d4d4d4" stroke-width="1" fill="none"/></svg>
<div class="a" style="left:61px;top:514px;font-size:16px;color:#111">mysql</div>
<svg class="a" style="left:40px;top:538px" width="14" height="16" viewBox="0 0 14 16"><path d="M0 2 Q0 0 7 0 Q14 0 14 2 V4 Q14 6 7 6 Q0 6 0 4Z" fill="#5c5c5c"/><path d="M0.5 2.2 Q7 4.8 13.5 2.2" stroke="#d4d4d4" stroke-width="1" fill="none"/><path d="M0 7 Q0 5 7 5 Q14 5 14 7 V9 Q14 11 7 11 Q0 11 0 9Z" fill="#5c5c5c"/><path d="M0.5 7.2 Q7 9.8 13.5 7.2" stroke="#d4d4d4" stroke-width="1" fill="none"/><path d="M0 12 Q0 10 7 10 Q14 10 14 12 V14 Q14 16 7 16 Q0 16 0 14Z" fill="#5c5c5c"/><path d="M0.5 12.2 Q7 14.8 13.5 12.2" stroke="#d4d4d4" stroke-width="1" fill="none"/></svg>
<div class="a" style="left:61px;top:538px;font-size:16px;color:#111">performance_schema</div>
<svg class="a" style="left:40px;top:562px" width="14" height="16" viewBox="0 0 14 16"><path d="M0 2 Q0 0 7 0 Q14 0 14 2 V4 Q14 6 7 6 Q0 6 0 4Z" fill="#5c5c5c"/><path d="M0.5 2.2 Q7 4.8 13.5 2.2" stroke="#d4d4d4" stroke-width="1" fill="none"/><path d="M0 7 Q0 5 7 5 Q14 5 14 7 V9 Q14 11 7 11 Q0 11 0 9Z" fill="#5c5c5c"/><path d="M0.5 7.2 Q7 9.8 13.5 7.2" stroke="#d4d4d4" stroke-width="1" fill="none"/><path d="M0 12 Q0 10 7 10 Q14 10 14 12 V14 Q14 16 7 16 Q0 16 0 14Z" fill="#5c5c5c"/><path d="M0.5 12.2 Q7 14.8 13.5 12.2" stroke="#d4d4d4" stroke-width="1" fill="none"/></svg>
<div class="a" style="left:61px;top:562px;font-size:16px;color:#111">sai</div>
<svg class="a" style="left:40px;top:586px" width="14" height="16" viewBox="0 0 14 16"><path d="M0 2 Q0 0 7 0 Q14 0 14 2 V4 Q14 6 7 6 Q0 6 0 4Z" fill="#5c5c5c"/><path d="M0.5 2.2 Q7 4.8 13.5 2.2" stroke="#d4d4d4" stroke-width="1" fill="none"/><path d="M0 7 Q0 5 7 5 Q14 5 14 7 V9 Q14 11 7 11 Q0 11 0 9Z" fill="#5c5c5c"/><path d="M0.5 7.2 Q7 9.8 13.5 7.2" stroke="#d4d4d4" stroke-width="1" fill="none"/><path d="M0 12 Q0 10 7 10 Q14 10 14 12 V14 Q14 16 7 16 Q0 16 0 14Z" fill="#5c5c5c"/><path d="M0.5 12.2 Q7 14.8 13.5 12.2" stroke="#d4d4d4" stroke-width="1" fill="none"/></svg>
<div class="a" style="left:61px;top:586px;font-size:16px;color:#111">search</div>
<svg class="a" style="left:40px;top:610px" width="14" height="16" viewBox="0 0 14 16"><path d="M0 2 Q0 0 7 0 Q14 0 14 2 V4 Q14 6 7 6 Q0 6 0 4Z" fill="#5c5c5c"/><path d="M0.5 2.2 Q7 4.8 13.5 2.2" stroke="#d4d4d4" stroke-width="1" fill="none"/><path d="M0 7 Q0 5 7 5 Q14 5 14 7 V9 Q14 11 7 11 Q0 11 0 9Z" fill="#5c5c5c"/><path d="M0.5 7.2 Q7 9.8 13.5 7.2" stroke="#d4d4d4" stroke-width="1" fill="none"/><path d="M0 12 Q0 10 7 10 Q14 10 14 12 V14 Q14 16 7 16 Q0 16 0 14Z" fill="#5c5c5c"/><path d="M0.5 12.2 Q7 14.8 13.5 12.2" stroke="#d4d4d4" stroke-width="1" fill="none"/></svg>
<div class="a" style="left:61px;top:610px;font-size:16px;color:#111">security</div>
<svg class="a" style="left:40px;top:634px" width="14" height="16" viewBox="0 0 14 16"><path d="M0 2 Q0 0 7 0 Q14 0 14 2 V4 Q14 6 7 6 Q0 6 0 4Z" fill="#5c5c5c"/><path d="M0.5 2.2 Q7 4.8 13.5 2.2" stroke="#d4d4d4" stroke-width="1" fill="none"/><path d="M0 7 Q0 5 7 5 Q14 5 14 7 V9 Q14 11 7 11 Q0 11 0 9Z" fill="#5c5c5c"/><path d="M0.5 7.2 Q7 9.8 13.5 7.2" stroke="#d4d4d4" stroke-width="1" fill="none"/><path d="M0 12 Q0 10 7 10 Q14 10 14 12 V14 Q14 16 7 16 Q0 16 0 14Z" fill="#5c5c5c"/><path d="M0.5 12.2 Q7 14.8 13.5 12.2" stroke="#d4d4d4" stroke-width="1" fill="none"/></svg>
<div class="a" style="left:61px;top:634px;font-size:16px;color:#111">tbl_stu</div>
<svg class="a" style="left:40px;top:658px" width="14" height="16" viewBox="0 0 14 16"><path d="M0 2 Q0 0 7 0 Q14 0 14 2 V4 Q14 6 7 6 Q0 6 0 4Z" fill="#5c5c5c"/><path d="M0.5 2.2 Q7 4.8 13.5 2.2" stroke="#d4d4d4" stroke-width="1" fill="none"/><path d="M0 7 Q0 5 7 5 Q14 5 14 7 V9 Q14 11 7 11 Q0 11 0 9Z" fill="#5c5c5c"/><path d="M0.5 7.2 Q7 9.8 13.5 7.2" stroke="#d4d4d4" stroke-width="1" fill="none"/><path d="M0 12 Q0 10 7 10 Q14 10 14 12 V14 Q14 16 7 16 Q0 16 0 14Z" fill="#5c5c5c"/><path d="M0.5 12.2 Q7 14.8 13.5 12.2" stroke="#d4d4d4" stroke-width="1" fill="none"/></svg>
<div class="a" style="left:61px;top:658px;font-size:16px;color:#111">test</div>
<svg class="a" style="left:40px;top:682px" width="14" height="16" viewBox="0 0 14 16"><path d="M0 2 Q0 0 7 0 Q14 0 14 2 V4 Q14 6 7 6 Q0 6 0 4Z" fill="#5c5c5c"/><path d="M0.5 2.2 Q7 4.8 13.5 2.2" stroke="#d4d4d4" stroke-width="1" fill="none"/><path d="M0 7 Q0 5 7 5 Q14 5 14 7 V9 Q14 11 7 11 Q0 11 0 9Z" fill="#5c5c5c"/><path d="M0.5 7.2 Q7 9.8 13.5 7.2" stroke="#d4d4d4" stroke-width="1" fill="none"/><path d="M0 12 Q0 10 7 10 Q14 10 14 12 V14 Q14 16 7 16 Q0 16 0 14Z" fill="#5c5c5c"/><path d="M0.5 12.2 Q7 14.8 13.5 12.2" stroke="#d4d4d4" stroke-width="1" fill="none"/></svg>
<div class="a" style="left:61px;top:682px;font-size:16px;color:#111">thinkphp</div>
<svg class="a" style="left:40px;top:706px" width="14" height="16" viewBox="0 0 14 16"><path d="M0 2 Q0 0 7 0 Q14 0 14 2 V4 Q14 6 7 6 Q0 6 0 4Z" fill="#5c5c5c"/><path d="M0.5 2.2 Q7 4.8 13.5 2.2" stroke="#d4d4d4" stroke-width="1" fill="none"/><path d="M0 7 Q0 5 7 5 Q14 5 14 7 V9 Q14 11 7 11 Q0 11 0 9Z" fill="#5c5c5c"/><path d="M0.5 7.2 Q7 9.8 13.5 7.2" stroke="#d4d4d4" stroke-width="1" fill="none"/><path d="M0 12 Q0 10 7 10 Q14 10 14 12 V14 Q14 16 7 16 Q0 16 0 14Z" fill="#5c5c5c"/><path d="M0.5 12.2 Q7 14.8 13.5 12.2" stroke="#d4d4d4" stroke-width="1" fill="none"/></svg>
<div class="a" style="left:61px;top:706px;font-size:16px;color:#111">ultrax</div>
<svg class="a" style="left:40px;top:730px" width="14" height="16" viewBox="0 0 14 16"><path d="M0 2 Q0 0 7 0 Q14 0 14 2 V4 Q14 6 7 6 Q0 6 0 4Z" fill="#5c5c5c"/><path d="M0.5 2.2 Q7 4.8 13.5 2.2" stroke="#d4d4d4" stroke-width="1" fill="none"/><path d="M0 7 Q0 5 7 5 Q14 5 14 7 V9 Q14 11 7 11 Q0 11 0 9Z" fill="#5c5c5c"/><path d="M0.5 7.2 Q7 9.8 13.5 7.2" stroke="#d4d4d4" stroke-width="1" fill="none"/><path d="M0 12 Q0 10 7 10 Q14 10 14 12 V14 Q14 16 7 16 Q0 16 0 14Z" fill="#5c5c5c"/><path d="M0.5 12.2 Q7 14.8 13.5 12.2" stroke="#d4d4d4" stroke-width="1" fill="none"/></svg>
<div class="a" style="left:61px;top:730px;font-size:16px;color:#111">winedb</div>
<svg class="a" style="left:40px;top:754px" width="14" height="16" viewBox="0 0 14 16"><path d="M0 2 Q0 0 7 0 Q14 0 14 2 V4 Q14 6 7 6 Q0 6 0 4Z" fill="#5c5c5c"/><path d="M0.5 2.2 Q7 4.8 13.5 2.2" stroke="#d4d4d4" stroke-width="1" fill="none"/><path d="M0 7 Q0 5 7 5 Q14 5 14 7 V9 Q14 11 7 11 Q0 11 0 9Z" fill="#5c5c5c"/><path d="M0.5 7.2 Q7 9.8 13.5 7.2" stroke="#d4d4d4" stroke-width="1" fill="none"/><path d="M0 12 Q0 10 7 10 Q14 10 14 12 V14 Q14 16 7 16 Q0 16 0 14Z" fill="#5c5c5c"/><path d="M0.5 12.2 Q7 14.8 13.5 12.2" stroke="#d4d4d4" stroke-width="1" fill="none"/></svg>
<div class="a" style="left:61px;top:754px;font-size:16px;color:#111">ws</div>
<svg class="a" style="left:40px;top:778px" width="14" height="16" viewBox="0 0 14 16"><path d="M0 2 Q0 0 7 0 Q14 0 14 2 V4 Q14 6 7 6 Q0 6 0 4Z" fill="#5c5c5c"/><path d="M0.5 2.2 Q7 4.8 13.5 2.2" stroke="#d4d4d4" stroke-width="1" fill="none"/><path d="M0 7 Q0 5 7 5 Q14 5 14 7 V9 Q14 11 7 11 Q0 11 0 9Z" fill="#5c5c5c"/><path d="M0.5 7.2 Q7 9.8 13.5 7.2" stroke="#d4d4d4" stroke-width="1" fill="none"/><path d="M0 12 Q0 10 7 10 Q14 10 14 12 V14 Q14 16 7 16 Q0 16 0 14Z" fill="#5c5c5c"/><path d="M0.5 12.2 Q7 14.8 13.5 12.2" stroke="#d4d4d4" stroke-width="1" fill="none"/></svg>
<div class="a" style="left:61px;top:778px;font-size:16px;color:#111">xycms</div>
<svg class="a" style="left:235px;top:109px" width="11" height="7" viewBox="0 0 11 7"><path d="M1 6L5.5 1.5L10 6" stroke="#444" stroke-width="1.8" fill="none"/></svg>
<div class="a" style="left:283px;top:109px;font-size:15px;color:#111">对象</div>
<div class="a" style="left:341px;top:102px;width:364px;height:31px;background:#fff;border-left:1px solid #bdbdbd;border-bottom:1px solid #bdbdbd"></div>
<svg class="a" style="left:260px;top:145px" width="17" height="17" viewBox="0 0 17 17"><rect x="0.5" y="0.5" width="14" height="13" rx="1" fill="#fff" stroke="#b0b8c0"/><rect x="0" y="0" width="15" height="4" rx="1" fill="#b0b8c0"/><path d="M5 4V13M10 4V13M1 7H14M1 10H14" stroke="#b0b8c0"/></svg>
<div class="a" style="left:280px;top:144px;font-size:15px;color:#8a8a8a">打开表</div>
<svg class="a" style="left:334px;top:145px" width="17" height="17" viewBox="0 0 17 17"><rect x="0.5" y="0.5" width="14" height="13" rx="1" fill="#fff" stroke="#b0b8c0"/><rect x="0" y="0" width="15" height="4" rx="1" fill="#b0b8c0"/><path d="M5 4V13M10 4V13M1 7H14M1 10H14" stroke="#b0b8c0"/></svg>
<div class="a" style="left:354px;top:144px;font-size:15px;color:#8a8a8a">设计表</div>
<svg class="a" style="left:408px;top:145px" width="17" height="17" viewBox="0 0 17 17"><rect x="0.5" y="0.5" width="14" height="13" rx="1" fill="#fff" stroke="#3d7dbe"/><rect x="0" y="0" width="15" height="4" rx="1" fill="#3d7dbe"/><path d="M5 4V13M10 4V13M1 7H14M1 10H14" stroke="#3d7dbe"/><circle cx="12" cy="13" r="4" fill="#3cb043"/><path d="M12 11V15M10 13H14" stroke="#fff" stroke-width="1.3"/></svg>
<div class="a" style="left:428px;top:144px;font-size:15px;color:#111">新建表</div>
<svg class="a" style="left:482px;top:145px" width="17" height="17" viewBox="0 0 17 17"><rect x="0.5" y="0.5" width="14" height="13" rx="1" fill="#fff" stroke="#b0b8c0"/><rect x="0" y="0" width="15" height="4" rx="1" fill="#b0b8c0"/><path d="M5 4V13M10 4V13M1 7H14M1 10H14" stroke="#b0b8c0"/></svg>
<div class="a" style="left:501px;top:144px;font-size:15px;color:#8a8a8a">删除表</div>
<svg class="a" style="left:556px;top:145px" width="17" height="17" viewBox="0 0 17 17"><rect x="0.5" y="0.5" width="14" height="13" rx="1" fill="#fff" stroke="#3d7dbe"/><rect x="0" y="0" width="15" height="4" rx="1" fill="#3d7dbe"/><path d="M5 4V13M10 4V13M1 7H14M1 10H14" stroke="#3d7dbe"/><path d="M16 14 Q13 10 10 13 L8 12 L9 16 L13 16 L11 14 Q13 13 16 15Z" fill="#3cb043"/></svg>
<div class="a" style="left:576px;top:144px;font-size:15px;color:#111">导入向导</div>
<svg class="a" style="left:645px;top:145px" width="17" height="17" viewBox="0 0 17 17"><rect x="0.5" y="0.5" width="14" height="13" rx="1" fill="#fff" stroke="#3d7dbe"/><rect x="0" y="0" width="15" height="4" rx="1" fill="#3d7dbe"/><path d="M5 4V13M10 4V13M1 7H14M1 10H14" stroke="#3d7dbe"/><path d="M9 11 Q12 9 14 13 L16 12 L15 16 L11 15 L13 14 Q12 12 9 13Z" fill="#f0a030"/></svg>
<div class="a" style="left:665px;top:144px;font-size:15px;color:#111">导出向导</div>
<div class="a" style="left:251px;top:169px;width:454px;height:629px;background:#fff"></div>
<svg class="a" style="left:255px;top:172px" width="16" height="15" viewBox="0 0 16 15"><rect x="0.5" y="0.5" width="15" height="14" rx="1.5" fill="#fff" stroke="#4a87c6"/><rect x="0" y="0" width="16" height="4" rx="1.5" fill="#3b7dc0"/><path d="M5.5 4V14M10.5 4V14M1 7.5H15M1 10.5H15" stroke="#4a87c6" stroke-width="1"/></svg>
<div class="a" style="left:273px;top:171px;font-size:15px;color:#111;letter-spacing:-0.4px">CHARACTER_SETS</div>
<svg class="a" style="left:255px;top:193px" width="16" height="15" viewBox="0 0 16 15"><rect x="0.5" y="0.5" width="15" height="14" rx="1.5" fill="#fff" stroke="#4a87c6"/><rect x="0" y="0" width="16" height="4" rx="1.5" fill="#3b7dc0"/><path d="M5.5 4V14M10.5 4V14M1 7.5H15M1 10.5H15" stroke="#4a87c6" stroke-width="1"/></svg>
<div class="a" style="left:273px;top:192px;font-size:15px;color:#111;letter-spacing:-0.4px">COLLATION_CHARACTER_SET_APPLICABILITY</div>
<svg class="a" style="left:255px;top:214px" width="16" height="15" viewBox="0 0 16 15"><rect x="0.5" y="0.5" width="15" height="14" rx="1.5" fill="#fff" stroke="#4a87c6"/><rect x="0" y="0" width="16" height="4" rx="1.5" fill="#3b7dc0"/><path d="M5.5 4V14M10.5 4V14M1 7.5H15M1 10.5H15" stroke="#4a87c6" stroke-width="1"/></svg>
<div class="a" style="left:273px;top:213px;font-size:15px;color:#111;letter-spacing:-0.4px">COLLATIONS</div>
<svg class="a" style="left:255px;top:235px" width="16" height="15" viewBox="0 0 16 15"><rect x="0.5" y="0.5" width="15" height="14" rx="1.5" fill="#fff" stroke="#4a87c6"/><rect x="0" y="0" width="16" height="4" rx="1.5" fill="#3b7dc0"/><path d="M5.5 4V14M10.5 4V14M1 7.5H15M1 10.5H15" stroke="#4a87c6" stroke-width="1"/></svg>
<div class="a" style="left:273px;top:234px;font-size:15px;color:#111;letter-spacing:-0.4px">COLUMN_PRIVILEGES</div>
<svg class="a" style="left:255px;top:256px" width="16" height="15" viewBox="0 0 16 15"><rect x="0.5" y="0.5" width="15" height="14" rx="1.5" fill="#fff" stroke="#4a87c6"/><rect x="0" y="0" width="16" height="4" rx="1.5" fill="#3b7dc0"/><path d="M5.5 4V14M10.5 4V14M1 7.5H15M1 10.5H15" stroke="#4a87c6" stroke-width="1"/></svg>
<div class="a" style="left:273px;top:255px;font-size:15px;color:#111;letter-spacing:-0.4px">COLUMNS</div>
<svg class="a" style="left:255px;top:277px" width="16" height="15" viewBox="0 0 16 15"><rect x="0.5" y="0.5" width="15" height="14" rx="1.5" fill="#fff" stroke="#4a87c6"/><rect x="0" y="0" width="16" height="4" rx="1.5" fill="#3b7dc0"/><path d="M5.5 4V14M10.5 4V14M1 7.5H15M1 10.5H15" stroke="#4a87c6" stroke-width="1"/></svg>
<div class="a" style="left:273px;top:276px;font-size:15px;color:#111;letter-spacing:-0.4px">ENGINES</div>
<svg class="a" style="left:255px;top:298px" width="16" height="15" viewBox="0 0 16 15"><rect x="0.5" y="0.5" width="15" height="14" rx="1.5" fill="#fff" stroke="#4a87c6"/><rect x="0" y="0" width="16" height="4" rx="1.5" fill="#3b7dc0"/><path d="M5.5 4V14M10.5 4V14M1 7.5H15M1 10.5H15" stroke="#4a87c6" stroke-width="1"/></svg>
<div class="a" style="left:273px;top:297px;font-size:15px;color:#111;letter-spacing:-0.4px">EVENTS</div>
<svg class="a" style="left:255px;top:319px" width="16" height="15" viewBox="0 0 16 15"><rect x="0.5" y="0.5" width="15" height="14" rx="1.5" fill="#fff" stroke="#4a87c6"/><rect x="0" y="0" width="16" height="4" rx="1.5" fill="#3b7dc0"/><path d="M5.5 4V14M10.5 4V14M1 7.5H15M1 10.5H15" stroke="#4a87c6" stroke-width="1"/></svg>
<div class="a" style="left:273px;top:318px;font-size:15px;color:#111;letter-spacing:-0.4px">FILES</div>
<svg class="a" style="left:255px;top:340px" width="16" height="15" viewBox="0 0 16 15"><rect x="0.5" y="0.5" width="15" height="14" rx="1.5" fill="#fff" stroke="#4a87c6"/><rect x="0" y="0" width="16" height="4" rx="1.5" fill="#3b7dc0"/><path d="M5.5 4V14M10.5 4V14M1 7.5H15M1 10.5H15" stroke="#4a87c6" stroke-width="1"/></svg>
<div class="a" style="left:273px;top:339px;font-size:15px;color:#111;letter-spacing:-0.4px">GLOBAL_STATUS</div>
<svg class="a" style="left:255px;top:361px" width="16" height="15" viewBox="0 0 16 15"><rect x="0.5" y="0.5" width="15" height="14" rx="1.5" fill="#fff" stroke="#4a87c6"/><rect x="0" y="0" width="16" height="4" rx="1.5" fill="#3b7dc0"/><path d="M5.5 4V14M10.5 4V14M1 7.5H15M1 10.5H15" stroke="#4a87c6" stroke-width="1"/></svg>
<div class="a" style="left:273px;top:360px;font-size:15px;color:#111;letter-spacing:-0.4px">GLOBAL_VARIABLES</div>
<svg class="a" style="left:255px;top:382px" width="16" height="15" viewBox="0 0 16 15"><rect x="0.5" y="0.5" width="15" height="14" rx="1.5" fill="#fff" stroke="#4a87c6"/><rect x="0" y="0" width="16" height="4" rx="1.5" fill="#3b7dc0"/><path d="M5.5 4V14M10.5 4V14M1 7.5H15M1 10.5H15" stroke="#4a87c6" stroke-width="1"/></svg>
<div class="a" style="left:273px;top:381px;font-size:15px;color:#111;letter-spacing:-0.4px">INNODB_BUFFER_PAGE</div>
<svg class="a" style="left:255px;top:403px" width="16" height="15" viewBox="0 0 16 15"><rect x="0.5" y="0.5" width="15" height="14" rx="1.5" fill="#fff" stroke="#4a87c6"/><rect x="0" y="0" width="16" height="4" rx="1.5" fill="#3b7dc0"/><path d="M5.5 4V14M10.5 4V14M1 7.5H15M1 10.5H15" stroke="#4a87c6" stroke-width="1"/></svg>
<div class="a" style="left:273px;top:402px;font-size:15px;color:#111;letter-spacing:-0.4px">INNODB_BUFFER_PAGE_LRU</div>
<svg class="a" style="left:255px;top:424px" width="16" height="15" viewBox="0 0 16 15"><rect x="0.5" y="0.5" width="15" height="14" rx="1.5" fill="#fff" stroke="#4a87c6"/><rect x="0" y="0" width="16" height="4" rx="1.5" fill="#3b7dc0"/><path d="M5.5 4V14M10.5 4V14M1 7.5H15M1 10.5H15" stroke="#4a87c6" stroke-width="1"/></svg>
<div class="a" style="left:273px;top:423px;font-size:15px;color:#111;letter-spacing:-0.4px">INNODB_BUFFER_POOL_STATS</div>
<svg class="a" style="left:255px;top:445px" width="16" height="15" viewBox="0 0 16 15"><rect x="0.5" y="0.5" width="15" height="14" rx="1.5" fill="#fff" stroke="#4a87c6"/><rect x="0" y="0" width="16" height="4" rx="1.5" fill="#3b7dc0"/><path d="M5.5 4V14M10.5 4V14M1 7.5H15M1 10.5H15" stroke="#4a87c6" stroke-width="1"/></svg>
<div class="a" style="left:273px;top:444px;font-size:15px;color:#111;letter-spacing:-0.4px">INNODB_CMP</div>
<svg class="a" style="left:255px;top:466px" width="16" height="15" viewBox="0 0 16 15"><rect x="0.5" y="0.5" width="15" height="14" rx="1.5" fill="#fff" stroke="#4a87c6"/><rect x="0" y="0" width="16" height="4" rx="1.5" fill="#3b7dc0"/><path d="M5.5 4V14M10.5 4V14M1 7.5H15M1 10.5H15" stroke="#4a87c6" stroke-width="1"/></svg>
<div class="a" style="left:273px;top:465px;font-size:15px;color:#111;letter-spacing:-0.4px">INNODB_CMP_RESET</div>
<svg class="a" style="left:255px;top:487px" width="16" height="15" viewBox="0 0 16 15"><rect x="0.5" y="0.5" width="15" height="14" rx="1.5" fill="#fff" stroke="#4a87c6"/><rect x="0" y="0" width="16" height="4" rx="1.5" fill="#3b7dc0"/><path d="M5.5 4V14M10.5 4V14M1 7.5H15M1 10.5H15" stroke="#4a87c6" stroke-width="1"/></svg>
<div class="a" style="left:273px;top:486px;font-size:15px;color:#111;letter-spacing:-0.4px">INNODB_CMPMEM</div>
<svg class="a" style="left:255px;top:508px" width="16" height="15" viewBox="0 0 16 15"><rect x="0.5" y="0.5" width="15" height="14" rx="1.5" fill="#fff" stroke="#4a87c6"/><rect x="0" y="0" width="16" height="4" rx="1.5" fill="#3b7dc0"/><path d="M5.5 4V14M10.5 4V14M1 7.5H15M1 10.5H15" stroke="#4a87c6" stroke-width="1"/></svg>
<div class="a" style="left:273px;top:507px;font-size:15px;color:#111;letter-spacing:-0.4px">INNODB_CMPMEM_RESET</div>
<svg class="a" style="left:255px;top:529px" width="16" height="15" viewBox="0 0 16 15"><rect x="0.5" y="0.5" width="15" height="14" rx="1.5" fill="#fff" stroke="#4a87c6"/><rect x="0" y="0" width="16" height="4" rx="1.5" fill="#3b7dc0"/><path d="M5.5 4V14M10.5 4V14M1 7.5H15M1 10.5H15" stroke="#4a87c6" stroke-width="1"/></svg>
<div class="a" style="left:273px;top:528px;font-size:15px;color:#111;letter-spacing:-0.4px">INNODB_LOCK_WAITS</div>
<svg class="a" style="left:255px;top:550px" width="16" height="15" viewBox="0 0 16 15"><rect x="0.5" y="0.5" width="15" height="14" rx="1.5" fill="#fff" stroke="#4a87c6"/><rect x="0" y="0" width="16" height="4" rx="1.5" fill="#3b7dc0"/><path d="M5.5 4V14M10.5 4V14M1 7.5H15M1 10.5H15" stroke="#4a87c6" stroke-width="1"/></svg>
<div class="a" style="left:273px;top:549px;font-size:15px;color:#111;letter-spacing:-0.4px">INNODB_LOCKS</div>
<svg class="a" style="left:255px;top:571px" width="16" height="15" viewBox="0 0 16 15"><rect x="0.5" y="0.5" width="15" height="14" rx="1.5" fill="#fff" stroke="#4a87c6"/><rect x="0" y="0" width="16" height="4" rx="1.5" fill="#3b7dc0"/><path d="M5.5 4V14M10.5 4V14M1 7.5H15M1 10.5H15" stroke="#4a87c6" stroke-width="1"/></svg>
<div class="a" style="left:273px;top:570px;font-size:15px;color:#111;letter-spacing:-0.4px">INNODB_TRX</div>
<svg class="a" style="left:255px;top:592px" width="16" height="15" viewBox="0 0 16 15"><rect x="0.5" y="0.5" width="15" height="14" rx="1.5" fill="#fff" stroke="#4a87c6"/><rect x="0" y="0" width="16" height="4" rx="1.5" fill="#3b7dc0"/><path d="M5.5 4V14M10.5 4V14M1 7.5H15M1 10.5H15" stroke="#4a87c6" stroke-width="1"/></svg>
<div class="a" style="left:273px;top:591px;font-size:15px;color:#111;letter-spacing:-0.4px">KEY_COLUMN_USAGE</div>
<svg class="a" style="left:255px;top:613px" width="16" height="15" viewBox="0 0 16 15"><rect x="0.5" y="0.5" width="15" height="14" rx="1.5" fill="#fff" stroke="#4a87c6"/><rect x="0" y="0" width="16" height="4" rx="1.5" fill="#3b7dc0"/><path d="M5.5 4V14M10.5 4V14M1 7.5H15M1 10.5H15" stroke="#4a87c6" stroke-width="1"/></svg>
<div class="a" style="left:273px;top:612px;font-size:15px;color:#111;letter-spacing:-0.4px">PARAMETERS</div>
<svg class="a" style="left:255px;top:634px" width="16" height="15" viewBox="0 0 16 15"><rect x="0.5" y="0.5" width="15" height="14" rx="1.5" fill="#fff" stroke="#4a87c6"/><rect x="0" y="0" width="16" height="4" rx="1.5" fill="#3b7dc0"/><path d="M5.5 4V14M10.5 4V14M1 7.5H15M1 10.5H15" stroke="#4a87c6" stroke-width="1"/></svg>
<div class="a" style="left:273px;top:633px;font-size:15px;color:#111;letter-spacing:-0.4px">PARTITIONS</div>
<svg class="a" style="left:255px;top:655px" width="16" height="15" viewBox="0 0 16 15"><rect x="0.5" y="0.5" width="15" height="14" rx="1.5" fill="#fff" stroke="#4a87c6"/><rect x="0" y="0" width="16" height="4" rx="1.5" fill="#3b7dc0"/><path d="M5.5 4V14M10.5 4V14M1 7.5H15M1 10.5H15" stroke="#4a87c6" stroke-width="1"/></svg>
<div class="a" style="left:273px;top:654px;font-size:15px;color:#111;letter-spacing:-0.4px">PLUGINS</div>
<svg class="a" style="left:255px;top:676px" width="16" height="15" viewBox="0 0 16 15"><rect x="0.5" y="0.5" width="15" height="14" rx="1.5" fill="#fff" stroke="#4a87c6"/><rect x="0" y="0" width="16" height="4" rx="1.5" fill="#3b7dc0"/><path d="M5.5 4V14M10.5 4V14M1 7.5H15M1 10.5H15" stroke="#4a87c6" stroke-width="1"/></svg>
<div class="a" style="left:273px;top:675px;font-size:15px;color:#111;letter-spacing:-0.4px">PROCESSLIST</div>
<svg class="a" style="left:255px;top:697px" width="16" height="15" viewBox="0 0 16 15"><rect x="0.5" y="0.5" width="15" height="14" rx="1.5" fill="#fff" stroke="#4a87c6"/><rect x="0" y="0" width="16" height="4" rx="1.5" fill="#3b7dc0"/><path d="M5.5 4V14M10.5 4V14M1 7.5H15M1 10.5H15" stroke="#4a87c6" stroke-width="1"/></svg>
<div class="a" style="left:273px;top:696px;font-size:15px;color:#111;letter-spacing:-0.4px">PROFILING</div>
<svg class="a" style="left:255px;top:718px" width="16" height="15" viewBox="0 0 16 15"><rect x="0.5" y="0.5" width="15" height="14" rx="1.5" fill="#fff" stroke="#4a87c6"/><rect x="0" y="0" width="16" height="4" rx="1.5" fill="#3b7dc0"/><path d="M5.5 4V14M10.5 4V14M1 7.5H15M1 10.5H15" stroke="#4a87c6" stroke-width="1"/></svg>
<div class="a" style="left:273px;top:717px;font-size:15px;color:#111;letter-spacing:-0.4px">REFERENTIAL_CONSTRAINTS</div>
<svg class="a" style="left:255px;top:739px" width="16" height="15" viewBox="0 0 16 15"><rect x="0.5" y="0.5" width="15" height="14" rx="1.5" fill="#fff" stroke="#4a87c6"/><rect x="0" y="0" width="16" height="4" rx="1.5" fill="#3b7dc0"/><path d="M5.5 4V14M10.5 4V14M1 7.5H15M1 10.5H15" stroke="#4a87c6" stroke-width="1"/></svg>
<div class="a" style="left:273px;top:738px;font-size:15px;color:#111;letter-spacing:-0.4px">ROUTINES</div>
<svg class="a" style="left:255px;top:760px" width="16" height="15" viewBox="0 0 16 15"><rect x="0.5" y="0.5" width="15" height="14" rx="1.5" fill="#fff" stroke="#4a87c6"/><rect x="0" y="0" width="16" height="4" rx="1.5" fill="#3b7dc0"/><path d="M5.5 4V14M10.5 4V14M1 7.5H15M1 10.5H15" stroke="#4a87c6" stroke-width="1"/></svg>
<div class="a" style="left:273px;top:759px;font-size:15px;color:#111;letter-spacing:-0.4px">SCHEMA_PRIVILEGES</div>
<svg class="a" style="left:613px;top:172px" width="16" height="15" viewBox="0 0 16 15"><rect x="0.5" y="0.5" width="15" height="14" rx="1.5" fill="#fff" stroke="#4a87c6"/><rect x="0" y="0" width="16" height="4" rx="1.5" fill="#3b7dc0"/><path d="M5.5 4V14M10.5 4V14M1 7.5H15M1 10.5H15" stroke="#4a87c6" stroke-width="1"/></svg>
<div class="a" style="left:630px;top:171px;font-size:15px;color:#111;letter-spacing:-0.4px">SCHEMATA</div>
<svg class="a" style="left:613px;top:193px" width="16" height="15" viewBox="0 0 16 15"><rect x="0.5" y="0.5" width="15" height="14" rx="1.5" fill="#fff" stroke="#4a87c6"/><rect x="0" y="0" width="16" height="4" rx="1.5" fill="#3b7dc0"/><path d="M5.5 4V14M10.5 4V14M1 7.5H15M1 10.5H15" stroke="#4a87c6" stroke-width="1"/></svg>
<div class="a" style="left:630px;top:192px;font-size:15px;color:#111;letter-spacing:-0.4px">SESSION_STATUS</div>
<svg class="a" style="left:613px;top:214px" width="16" height="15" viewBox="0 0 16 15"><rect x="0.5" y="0.5" width="15" height="14" rx="1.5" fill="#fff" stroke="#4a87c6"/><rect x="0" y="0" width="16" height="4" rx="1.5" fill="#3b7dc0"/><path d="M5.5 4V14M10.5 4V14M1 7.5H15M1 10.5H15" stroke="#4a87c6" stroke-width="1"/></svg>
<div class="a" style="left:630px;top:213px;font-size:15px;color:#111;letter-spacing:-0.4px">SESSION_VARIABLES</div>
<svg class="a" style="left:613px;top:235px" width="16" height="15" viewBox="0 0 16 15"><rect x="0.5" y="0.5" width="15" height="14" rx="1.5" fill="#fff" stroke="#4a87c6"/><rect x="0" y="0" width="16" height="4" rx="1.5" fill="#3b7dc0"/><path d="M5.5 4V14M10.5 4V14M1 7.5H15M1 10.5H15" stroke="#4a87c6" stroke-width="1"/></svg>
<div class="a" style="left:630px;top:234px;font-size:15px;color:#111;letter-spacing:-0.4px">STATISTICS</div>
<svg class="a" style="left:613px;top:256px" width="16" height="15" viewBox="0 0 16 15"><rect x="0.5" y="0.5" width="15" height="14" rx="1.5" fill="#fff" stroke="#4a87c6"/><rect x="0" y="0" width="16" height="4" rx="1.5" fill="#3b7dc0"/><path d="M5.5 4V14M10.5 4V14M1 7.5H15M1 10.5H15" stroke="#4a87c6" stroke-width="1"/></svg>
<div class="a" style="left:630px;top:255px;font-size:15px;color:#111;letter-spacing:-0.4px">TABLE_CONSTRAINTS</div>
<svg class="a" style="left:613px;top:277px" width="16" height="15" viewBox="0 0 16 15"><rect x="0.5" y="0.5" width="15" height="14" rx="1.5" fill="#fff" stroke="#4a87c6"/><rect x="0" y="0" width="16" height="4" rx="1.5" fill="#3b7dc0"/><path d="M5.5 4V14M10.5 4V14M1 7.5H15M1 10.5H15" stroke="#4a87c6" stroke-width="1"/></svg>
<div class="a" style="left:630px;top:276px;font-size:15px;color:#111;letter-spacing:-0.4px">TABLE_PRIVILEGES</div>
<svg class="a" style="left:613px;top:298px" width="16" height="15" viewBox="0 0 16 15"><rect x="0.5" y="0.5" width="15" height="14" rx="1.5" fill="#fff" stroke="#4a87c6"/><rect x="0" y="0" width="16" height="4" rx="1.5" fill="#3b7dc0"/><path d="M5.5 4V14M10.5 4V14M1 7.5H15M1 10.5H15" stroke="#4a87c6" stroke-width="1"/></svg>
<div class="a" style="left:630px;top:297px;font-size:15px;color:#111;letter-spacing:-0.4px">TABLES</div>
<svg class="a" style="left:613px;top:319px" width="16" height="15" viewBox="0 0 16 15"><rect x="0.5" y="0.5" width="15" height="14" rx="1.5" fill="#fff" stroke="#4a87c6"/><rect x="0" y="0" width="16" height="4" rx="1.5" fill="#3b7dc0"/><path d="M5.5 4V14M10.5 4V14M1 7.5H15M1 10.5H15" stroke="#4a87c6" stroke-width="1"/></svg>
<div class="a" style="left:630px;top:318px;font-size:15px;color:#111;letter-spacing:-0.4px">TABLESPACES</div>
<svg class="a" style="left:613px;top:340px" width="16" height="15" viewBox="0 0 16 15"><rect x="0.5" y="0.5" width="15" height="14" rx="1.5" fill="#fff" stroke="#4a87c6"/><rect x="0" y="0" width="16" height="4" rx="1.5" fill="#3b7dc0"/><path d="M5.5 4V14M10.5 4V14M1 7.5H15M1 10.5H15" stroke="#4a87c6" stroke-width="1"/></svg>
<div class="a" style="left:630px;top:339px;font-size:15px;color:#111;letter-spacing:-0.4px">TRIGGERS</div>
<svg class="a" style="left:613px;top:361px" width="16" height="15" viewBox="0 0 16 15"><rect x="0.5" y="0.5" width="15" height="14" rx="1.5" fill="#fff" stroke="#4a87c6"/><rect x="0" y="0" width="16" height="4" rx="1.5" fill="#3b7dc0"/><path d="M5.5 4V14M10.5 4V14M1 7.5H15M1 10.5H15" stroke="#4a87c6" stroke-width="1"/></svg>
<div class="a" style="left:630px;top:360px;font-size:15px;color:#111;letter-spacing:-0.4px">USER_PRIVILEGES</div>
<svg class="a" style="left:613px;top:382px" width="16" height="15" viewBox="0 0 16 15"><rect x="0.5" y="0.5" width="15" height="14" rx="1.5" fill="#fff" stroke="#4a87c6"/><rect x="0" y="0" width="16" height="4" rx="1.5" fill="#3b7dc0"/><path d="M5.5 4V14M10.5 4V14M1 7.5H15M1 10.5H15" stroke="#4a87c6" stroke-width="1"/></svg>
<div class="a" style="left:630px;top:381px;font-size:15px;color:#111;letter-spacing:-0.4px">VIEWS</div>
</div>
</body></html>
